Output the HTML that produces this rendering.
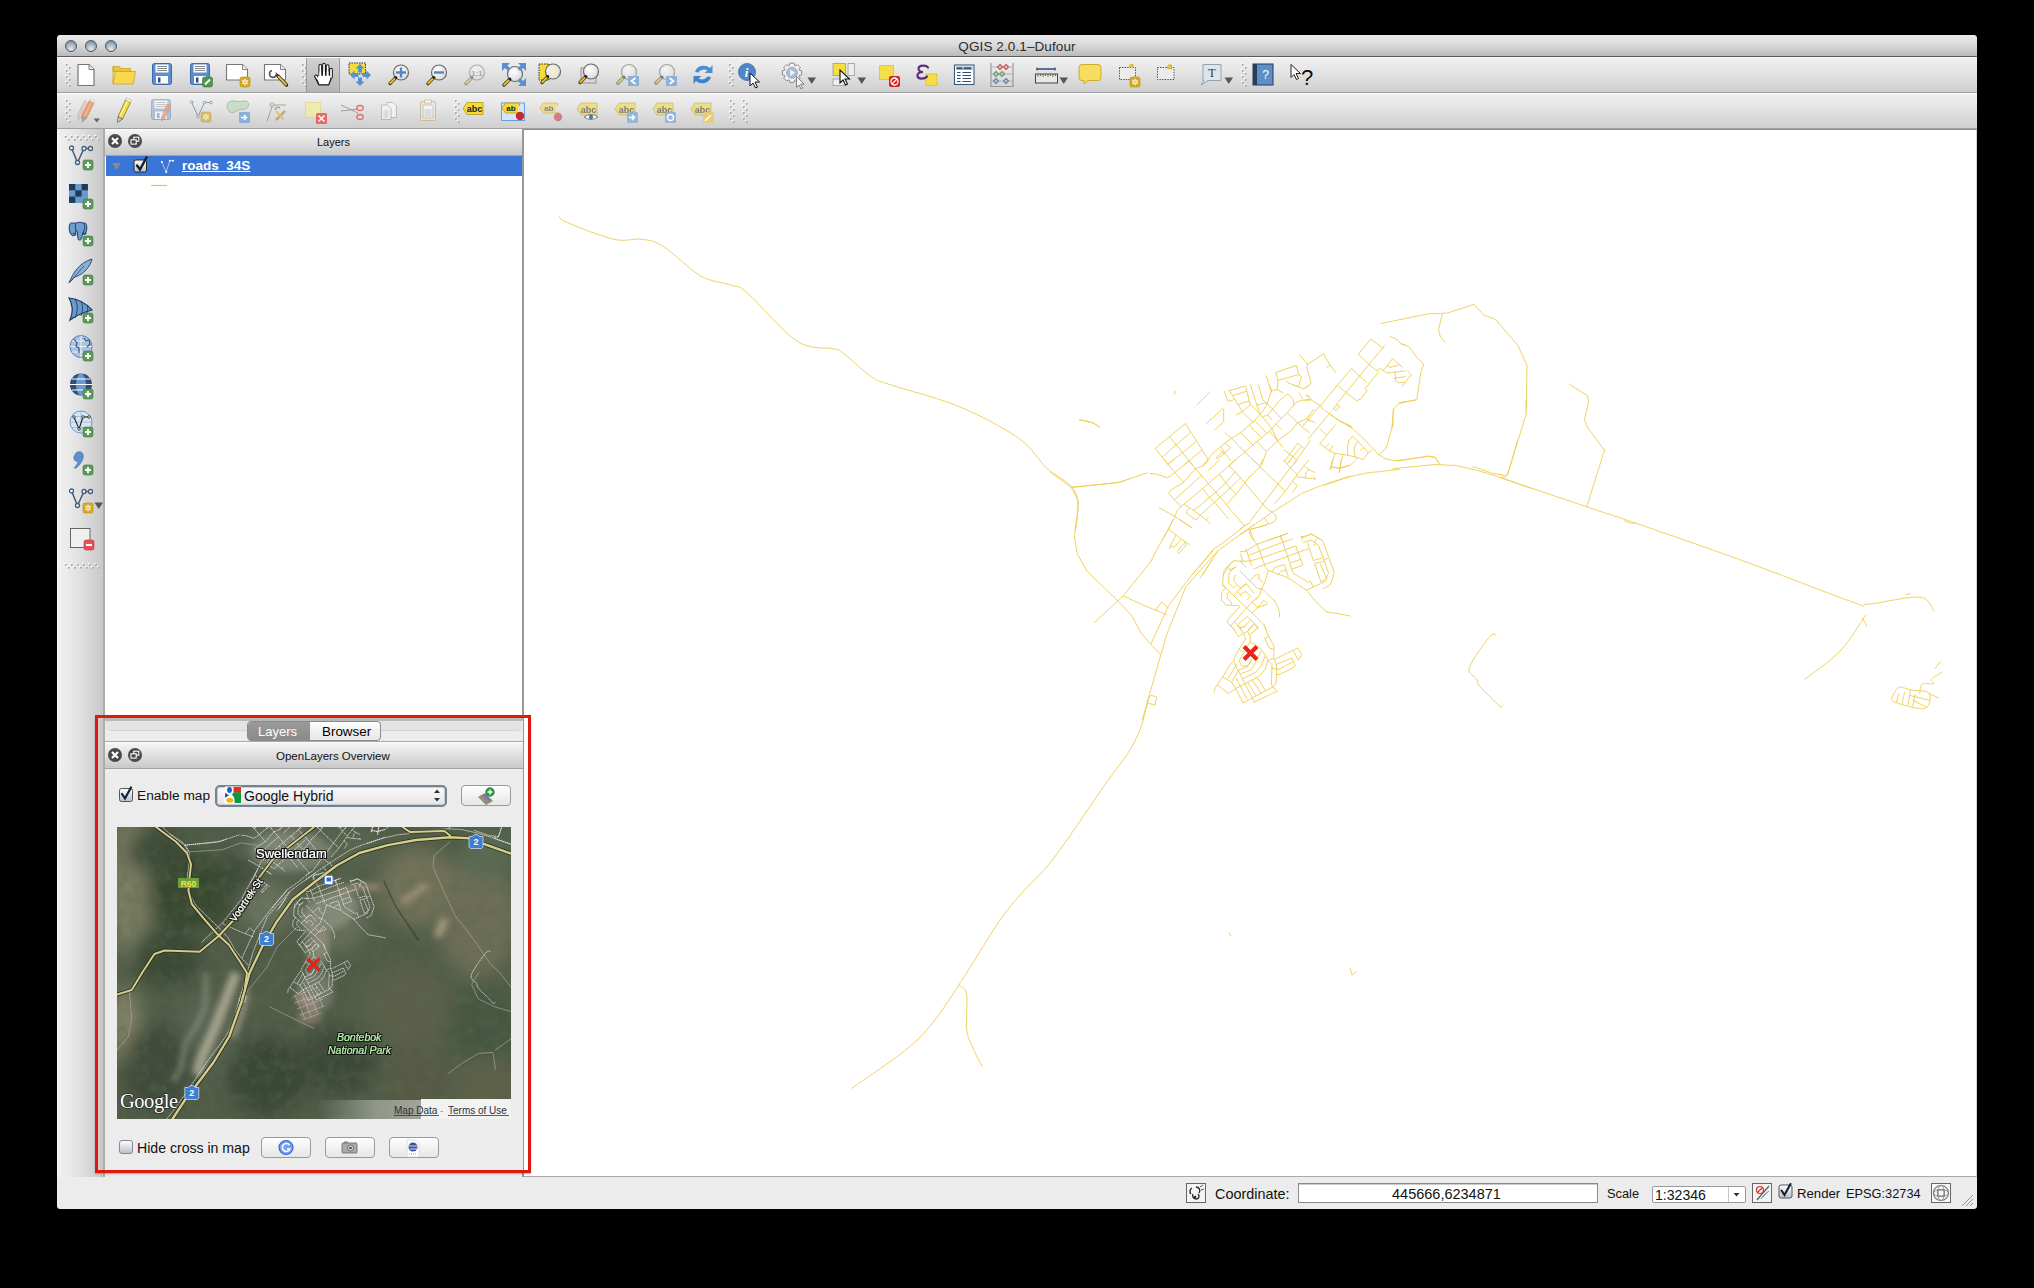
<!DOCTYPE html>
<html><head><meta charset="utf-8">
<style>
*{box-sizing:border-box;margin:0;padding:0}
html,body{width:2034px;height:1288px;background:#000;overflow:hidden;font-family:"Liberation Sans",sans-serif;color:#000}
.a{position:absolute}
#win{position:absolute;left:57px;top:35px;width:1920px;height:1174px;background:#ececec;border-radius:4px 4px 4px 4px;border-left:1px solid #fafafa}
#title{position:absolute;left:57px;top:35px;width:1920px;height:22px;background:linear-gradient(#ececec,#d8d8d8 50%,#bababa);border-bottom:1px solid #5a5a5a;border-radius:4px 4px 0 0}
.tt{position:absolute;left:57px;width:1920px;top:39px;text-align:center;font-size:13.5px;color:#2a2a2a;letter-spacing:0.1px}
.tl{position:absolute;top:40px;width:12px;height:12px;border-radius:50%;background:radial-gradient(circle at 50% 80%,#e4eaf0 0,#aebbc6 45%,#7e8e9b 85%);border:1px solid #4e5c68}
.tb{position:absolute;left:57px;width:1920px;height:36px;background:linear-gradient(#f0f0f0,#e6e6e6 35%,#cfcfcf);border-bottom:1px solid #a0a0a0;border-top:1px solid #fbfbfb}
#ltb{position:absolute;left:57px;top:129px;width:48px;height:1048px;background:linear-gradient(90deg,#f2f2f2,#e0e0e0 50%,#c8c8c8);border-right:2px solid #acacac;border-left:1px solid #fafafa}
#map{position:absolute;left:524px;top:129px;width:1453px;height:1048px;background:#fff;border-top:1px solid #8a8a8a;border-bottom:1px solid #a8a8a8;border-right:1px solid #d4d4d4}
#layers{position:absolute;left:105px;top:129px;width:418px;height:586px;background:#fff}
.dh{position:absolute;height:27px;background:linear-gradient(#f5f5f5,#e2e2e2 45%,#c8c8c8);border-top:1px solid #fdfdfd;border-bottom:1px solid #a2a2a2;font-size:12px;text-align:center;color:#111}
#split{position:absolute;left:522px;top:129px;width:2px;height:1048px;background:#979797}
#lower{position:absolute;left:105px;top:718px;width:418px;height:454px;background:#ececec}
#status{position:absolute;left:57px;top:1177px;width:1920px;height:32px;background:#ececec;border-radius:0 0 4px 4px}
#red{position:absolute;left:95px;top:715px;width:436px;height:458px;border:3px solid #dd1a0c;box-shadow:0 1.5px 1.5px rgba(0,0,0,0.22)}
.txt{position:absolute;white-space:nowrap;font-size:13px;color:#111}
</style></head><body>
<div id="win"></div>
<div id="title"></div>
<div class="tt">QGIS 2.0.1–Dufour</div>
<div class="tl" style="left:65px"></div><div class="tl" style="left:85px"></div><div class="tl" style="left:105px"></div>
<div class="tb" style="top:57px"></div>
<div class="tb" style="top:93px"></div>
<div id="ltb"></div>
<div id="layers"></div>
<div class="dh" style="left:105px;top:129px;width:418px"><span style="position:absolute;left:212px;top:6px;font-size:11px">Layers</span></div>
<div class="a" style="left:106px;top:156px;width:416px;height:20px;background:#3a76d8"></div>
<div class="txt" style="left:182px;top:158px;font-size:13.5px;font-weight:bold;color:#fff;text-decoration:underline">roads_34S</div>
<div id="split"></div>
<div id="map"></div>
<div id="lower"></div>
<div class="a" style="left:105px;top:718px;width:418px;height:3px;background:#b8b8b8"></div>
<div class="a" style="left:106px;top:721px;width:416px;height:10px;background:#e3e3e3;border-radius:0 0 5px 5px;border-bottom:1px solid #d4d4d4"></div>
<div class="a" style="left:105px;top:741px;width:418px;height:1px;background:#a8a8a8"></div>
<!-- tabs -->
<div class="a" style="left:247px;top:721px;width:134px;height:20px;border-radius:4px;border:1px solid #8a8a8a;background:linear-gradient(#fff,#f0f0f0 50%,#e8e8e8);overflow:hidden">
  <div class="a" style="left:0;top:0;width:62px;height:18px;background:linear-gradient(#9a9a9a,#8a8a8a)"></div>
  <div class="txt" style="left:10px;top:2px;color:#fff">Layers</div>
  <div class="txt" style="left:74px;top:2px;color:#000;font-size:13.4px">Browser</div>
</div>
<div class="dh" style="left:105px;top:742px;width:418px;height:27px"><span style="position:absolute;left:171px;top:7px;font-size:11.5px">OpenLayers Overview</span></div>
<div class="txt" style="left:137px;top:788px;font-size:13.7px">Enable map</div>
<div class="a" style="left:215px;top:785px;width:232px;height:22px;border-radius:5px;border:2px solid #76828e;box-shadow:inset 0 0 0 1px #c4ccd6;background:linear-gradient(#fafafa,#f0f0f0 50%,#e4e4e4)"></div>
<div class="txt" style="left:244px;top:788px;font-size:14px">Google Hybrid</div>
<div class="a" style="left:461px;top:785px;width:50px;height:21px;border-radius:4px;border:1px solid #9a9a9a;background:linear-gradient(#fff,#f2f2f2 50%,#e6e6e6)"></div>
<!-- satellite placeholder -->
<div id="sat" class="a" style="left:117px;top:827px;width:394px;height:292px;background:#4e5a3e;overflow:hidden"></div>
<div class="txt" style="left:137px;top:1140px;font-size:14.1px">Hide cross in map</div>
<div class="a" style="left:261px;top:1137px;width:50px;height:21px;border-radius:4px;border:1px solid #9a9a9a;background:linear-gradient(#fff,#f2f2f2 50%,#e6e6e6)"></div>
<div class="a" style="left:325px;top:1137px;width:50px;height:21px;border-radius:4px;border:1px solid #9a9a9a;background:linear-gradient(#fff,#f2f2f2 50%,#e6e6e6)"></div>
<div class="a" style="left:389px;top:1137px;width:50px;height:21px;border-radius:4px;border:1px solid #9a9a9a;background:linear-gradient(#fff,#f2f2f2 50%,#e6e6e6)"></div>
<div id="status"></div>
<div class="txt" style="left:1215px;top:1186px;font-size:14.4px">Coordinate:</div>
<div class="a" style="left:1298px;top:1183px;width:300px;height:20px;background:#fff;border:1px solid #8a8a8a;box-shadow:inset 0 1px 0 #ccc"></div>
<div class="txt" style="left:1392px;top:1186px;font-size:14.5px">445666,6234871</div>
<div class="txt" style="left:1607px;top:1186px;font-size:12.8px">Scale</div>
<div class="a" style="left:1652px;top:1186px;width:94px;height:17px;background:#fff;border:1px solid #9a9a9a;border-radius:2px"></div>
<div class="a" style="left:1728px;top:1187px;width:1px;height:15px;background:#c8c8c8"></div>
<div class="txt" style="left:1655px;top:1187px;font-size:14.1px">1:32346</div>
<div class="txt" style="left:1797px;top:1186px;font-size:13.2px">Render</div>
<div class="txt" style="left:1846px;top:1186px;font-size:12.8px">EPSG:32734</div>
<div id="red"></div>
<svg class="a" style="left:0;top:0" width="2034" height="1288" viewBox="0 0 2034 1288"><defs><clipPath id="mapclip"><rect x="525" y="130" width="1450" height="1046"/></clipPath></defs><g clip-path="url(#mapclip)" fill="none" stroke="#eecd50" stroke-width="0.9" stroke-linejoin="round" stroke-linecap="round"><path d="M1155.3 448.4 L1185.5 423.5 L1208.1 459.5 M1155.3 448.4 L1168.4 465.0 M1162.2 457.0 L1190.1 432.8 M1168.4 463.9 L1196.3 441.5 M1183.9 465.0 L1201.3 450.8 M1169.6 436.6 L1192.6 465.0 M1175.2 391.2 L1174.6 394.3 M1197.0 404.9 L1210.0 391.8 M1206.3 423.5 L1210.0 420.1 M1203.2 465.0 L1210.0 457.0 M1155.0 552.9 L1168.4 529.0 L1173.0 520.0 M1168.4 529.0 L1181.4 539.3 L1189.5 544.8 M1175.8 535.2 L1170.5 545.8 L1169.3 548.6 M1170.5 545.8 L1173.9 547.3 L1181.4 539.3 M1185.4 541.7 L1177.4 551.7 L1178.9 553.5 L1186.1 545.2 L1184.8 543.0 M1180.5 520.0 L1191.6 527.5 M1210.0 456.4 L1220.6 446.5 L1230.5 439.0 L1241.1 432.2 L1254.7 420.4 L1260.3 414.2 L1266.5 405.5 L1270.9 392.5 L1271.5 390.6 L1269.6 385.0 M1271.5 390.6 L1277.1 389.7 L1282.7 392.5 M1277.7 385.0 L1277.1 389.7 M1229.3 465.0 L1241.1 455.2 L1247.3 449.6 L1261.6 437.8 L1269.6 431.0 L1275.8 424.1 L1287.0 413.0 L1295.7 403.0 L1300.1 400.5 L1310.0 399.3 M1266.5 451.5 L1278.3 440.3 L1290.7 431.0 L1297.6 422.9 L1306.9 418.5 L1310.0 414.8 M1284.5 461.4 L1297.6 443.1 L1304.4 448.7 M1287.6 463.3 L1301.3 446.5 M1293.2 465.0 L1310.0 440.9 M1210.0 419.8 L1211.9 418.9 L1222.4 408.9 L1223.7 409.2 L1223.7 421.6 L1215.0 429.7 M1236.1 414.8 L1242.9 411.7 L1250.4 404.3 M1263.4 416.7 L1268.4 414.2 L1272.1 409.8 L1279.6 400.5 L1287.0 394.3 L1290.1 395.6 L1293.2 399.9 L1293.9 405.5 M1224.9 432.8 L1233.0 439.7 L1241.7 449.0 L1258.4 465.0 M1241.1 432.8 L1253.5 445.6 M1249.8 425.4 L1253.5 429.7 L1261.6 437.8 M1254.1 420.4 L1261.6 427.9 L1266.5 432.8 M1257.2 441.5 L1266.5 451.5 L1261.6 465.0 M1251.0 404.9 L1259.7 413.6 L1271.5 427.9 L1277.7 440.9 L1282.7 447.1 M1267.1 403.6 L1272.1 408.6 L1281.4 418.5 M1269.6 431.6 L1277.7 440.9 M1275.8 424.1 L1281.4 429.1 M1287.6 413.0 L1297.6 422.9 L1309.4 432.8 M1267.8 414.8 L1271.5 419.8 M1283.9 449.6 L1289.5 453.9 L1293.2 457.0 L1297.0 460.8 M1306.9 419.2 L1310.0 421.0 M1229.3 390.6 L1245.4 385.9 L1250.4 404.9 M1233.0 395.6 L1246.6 391.2 M1238.6 404.3 L1249.1 401.1 M1224.3 391.2 L1228.0 401.5 L1234.2 399.6 M1229.3 390.6 L1234.8 399.3 L1242.3 411.7 L1252.9 422.3 M1250.4 385.0 L1259.7 413.6 M1258.4 385.0 L1262.8 399.9 L1267.1 403.6 M1257.2 404.9 L1264.7 403.0 L1267.1 403.6 M1299.4 393.1 L1302.5 398.7 M1306.9 395.2 L1310.0 397.4 M1293.2 385.0 L1298.2 386.9 L1303.8 388.7 L1309.4 385.0 M1216.2 457.7 L1223.0 452.1 L1224.3 453.9 L1217.5 458.9 L1216.2 457.7 M1219.9 450.2 L1224.3 453.3 M1220.6 446.5 L1230.5 460.8 M1225.5 443.4 L1230.5 447.7 L1225.5 452.1 M1307.5 364.2 L1323.6 353.9 L1329.8 364.8 L1335.4 372.5 M1326.7 367.3 L1329.8 364.8 M1307.5 364.2 L1306.9 368.5 L1311.2 383.4 L1305.0 388.4 M1358.4 354.2 L1370.8 339.0 L1382.6 348.0 L1384.5 345.2 M1358.4 354.2 L1369.0 364.5 L1377.0 371.0 L1379.5 368.2 L1383.3 370.4 L1386.4 372.9 L1405.0 371.0 M1320.5 405.8 L1337.3 385.3 L1351.6 368.5 L1359.0 375.7 L1366.5 382.2 M1332.3 410.0 L1346.0 392.4 L1369.0 364.5 L1382.6 348.0 M1337.3 385.3 L1346.0 392.4 L1356.6 400.8 L1360.9 398.9 L1367.1 390.9 L1365.2 388.4 L1378.9 371.9 M1306.2 395.2 L1310.0 398.3 L1312.5 400.8 L1320.5 405.8 L1323.6 410.0 M1305.0 400.2 L1310.6 400.2 M1336.1 404.5 L1339.8 406.4 L1336.7 410.0 M1383.3 370.4 L1392.6 358.6 L1402.5 367.3 M1387.6 366.0 L1390.1 367.3 L1398.2 365.4 M1395.1 372.2 L1395.7 380.9 L1398.2 382.8 L1405.0 382.2 M1393.8 378.4 L1405.0 376.6 M1390.1 336.8 L1393.2 337.5 L1397.5 339.9 L1400.7 343.7 L1405.0 344.9 M1393.2 410.0 L1398.2 403.9 L1405.0 402.0 M1150.0 473.4 L1156.2 474.0 L1167.4 477.7 L1170.5 476.1 L1174.8 472.4 L1189.1 460.9 M1164.3 460.0 L1174.8 472.4 L1183.5 482.4 M1168.6 463.7 L1173.0 460.0 M1189.1 460.9 L1195.3 468.7 L1201.6 475.5 L1208.4 483.6 L1215.8 492.3 L1221.4 498.8 L1232.6 512.2 L1244.4 525.8 M1195.3 468.7 L1203.4 465.6 L1207.1 461.9 L1208.4 460.0 M1195.3 468.7 L1183.5 482.4 L1171.1 489.8 L1168.6 492.9 L1174.2 499.8 L1181.1 506.6 M1174.2 499.8 L1201.6 475.5 M1181.1 506.6 L1208.4 483.6 L1228.9 465.9 L1235.7 460.0 M1228.9 465.9 L1235.1 471.8 L1240.7 478.0 L1250.0 489.2 M1219.6 474.3 L1225.8 483.0 L1230.1 488.0 L1236.3 493.9 M1193.5 510.3 L1199.7 506.0 L1209.6 497.3 L1215.8 492.3 L1225.8 483.0 L1235.1 471.8 M1200.3 515.3 L1214.6 502.2 L1230.1 488.0 L1240.7 478.0 M1227.0 504.1 L1236.3 493.9 L1250.0 476.1 M1208.4 470.6 L1219.6 460.0 M1202.8 488.6 L1205.9 492.9 L1209.6 497.3 L1214.6 502.2 L1228.3 518.4 M1159.3 507.8 L1174.8 516.5 L1191.6 527.7 M1181.1 506.6 L1177.3 510.3 L1174.8 516.5 L1168.6 528.9 L1162.4 540.0 M1184.2 504.4 L1193.5 510.3 L1200.3 515.3 L1205.9 519.6 L1210.2 523.4 M1189.1 508.4 L1186.6 511.6 L1187.3 514.0 L1196.0 520.2 L1200.3 515.3 M1205.9 519.6 L1208.4 517.5 M1244.4 525.8 L1250.0 522.7 M1227.0 540.0 L1244.4 525.8 M1232.6 540.0 L1250.0 528.3 M1250.0 476.8 L1259.9 466.8 M1253.1 460.0 L1259.9 466.8 L1278.0 484.2 L1285.4 491.1 M1259.9 466.8 L1262.4 460.0 M1283.5 460.0 L1290.4 467.8 L1297.2 474.6 M1287.9 463.1 L1290.4 460.0 M1250.0 521.5 L1263.0 504.1 L1278.0 484.2 L1290.4 467.8 L1297.2 460.0 M1250.0 489.2 L1263.0 504.1 L1268.0 509.7 L1272.4 512.2 L1275.5 514.7 L1276.1 519.0 L1273.6 522.1 L1268.6 524.0 L1259.3 527.1 L1250.0 529.6 M1274.8 503.5 L1285.4 491.1 L1297.2 474.6 L1304.0 465.6 L1309.0 460.0 M1304.0 465.6 L1308.4 469.3 L1314.6 472.4 M1308.4 469.3 L1305.3 474.9 L1305.9 478.0 M1297.2 476.8 L1305.9 478.0 L1312.7 478.6 L1315.8 479.3 L1313.4 476.8 M1292.9 481.7 L1297.2 485.5 L1292.9 492.3 M1250.0 527.7 L1264.3 517.8 L1272.4 512.2 L1301.6 493.5 L1318.3 486.7 L1350.0 476.1 M1264.3 517.8 L1268.6 524.0 M1250.0 530.2 L1253.7 540.0 M1330.1 469.3 L1332.6 460.0 M1330.7 466.8 L1340.1 468.4 L1350.0 465.3 M1339.4 472.4 L1341.3 460.0 M1268.6 540.0 L1287.9 533.3 M1280.4 535.8 L1281.7 540.0 M1300.3 535.8 L1302.8 537.6 L1311.5 533.9 L1321.4 540.0 M1302.2 537.0 L1301.6 540.0 M1320.0 429.2 L1326.5 434.8 M1320.0 443.6 L1327.0 434.8 L1335.4 425.0 M1320.0 443.6 L1328.9 450.6 L1334.9 453.4 L1348.0 455.3 L1357.7 457.6 L1363.3 459.5 M1325.1 447.4 L1328.9 443.6 M1328.9 450.6 L1333.0 446.0 M1348.0 455.3 L1347.5 448.3 L1348.9 440.4 L1352.6 436.2 L1358.2 441.8 L1363.8 447.4 L1368.0 453.0 L1363.3 459.5 M1355.4 457.2 L1354.0 450.6 L1355.4 444.1 L1358.2 441.8 M1360.5 450.6 L1363.3 447.8 M1368.0 453.0 L1371.7 450.2 M1347.0 425.0 L1352.6 428.7 L1359.6 434.8 L1366.6 441.8 L1378.7 454.8 L1385.2 458.6 L1392.2 460.4 L1400.0 460.4 M1378.7 454.8 L1385.7 448.8 L1387.6 443.6 L1392.7 425.0 M1334.9 453.4 L1331.2 466.9 L1330.3 469.7 M1342.8 454.8 L1339.6 468.3 L1339.1 472.5 M1331.2 466.9 L1339.1 468.3 L1350.3 465.1 L1357.3 458.6 M1324.7 485.0 L1348.0 477.2 L1366.6 473.0 L1400.0 469.3 M1240.0 534.3 L1254.0 525.0 M1240.0 529.1 L1245.2 525.0 M1249.3 532.0 L1251.1 529.1 L1257.5 527.3 L1266.8 525.0 M1249.3 532.0 L1250.5 536.1 L1256.9 544.2 L1259.2 550.0 L1264.5 564.6 L1265.6 567.5 L1268.5 570.4 L1266.8 575.7 L1264.5 583.2 L1261.5 589.1 L1259.8 594.9 L1255.7 600.0 M1240.0 551.8 L1245.8 551.2 L1256.9 544.2 L1280.8 536.1 L1287.8 533.2 M1245.8 548.9 L1251.6 565.2 M1248.7 555.3 L1259.2 551.2 L1281.9 542.5 L1292.4 539.0 M1240.0 561.1 L1249.3 561.1 L1262.1 557.6 L1284.3 550.0 L1295.9 546.0 L1302.9 565.2 L1291.3 569.3 M1240.0 561.1 L1246.4 567.5 M1240.6 554.1 L1242.9 561.1 M1254.0 568.7 L1264.5 564.6 L1287.2 556.5 L1298.2 552.4 L1308.1 548.9 M1280.8 536.1 L1291.8 569.3 L1293.6 573.3 L1308.7 582.7 L1310.5 580.9 L1312.8 586.7 M1290.7 562.9 L1300.6 559.4 M1268.5 570.4 L1287.2 577.4 L1306.4 590.2 L1314.5 600.0 M1272.6 571.6 L1274.4 567.5 L1284.3 564.6 L1288.3 576.3 L1287.2 577.4 M1277.9 574.5 L1280.8 571.6 L1286.0 569.8 M1301.2 537.2 L1311.6 534.3 L1322.7 540.7 L1334.4 572.8 L1330.3 585.0 L1323.3 588.5 M1302.9 542.5 L1311.1 540.1 L1315.1 542.5 M1307.6 543.1 L1313.4 560.5 L1323.3 557.6 M1313.4 545.4 L1316.3 543.6 L1318.6 546.0 L1323.9 559.9 L1328.5 572.8 L1326.2 578.6 L1321.0 582.1 L1314.5 563.4 L1323.3 561.7 M1316.3 539.0 L1314.5 543.1 M1320.4 564.0 L1326.8 579.2 M1323.9 559.9 L1327.9 558.2 M1306.4 590.2 L1321.5 583.2 L1326.2 580.9 M1240.0 571.0 L1257.5 588.5 L1262.1 589.1 M1249.9 580.3 L1256.3 574.5 L1259.2 575.1 L1258.6 578.6 L1263.3 582.7 M1240.0 588.5 L1246.4 583.8 L1254.0 593.1 M1240.0 594.9 L1245.2 591.4 L1250.5 596.1 L1247.0 600.0 M1262.7 589.6 L1273.8 600.0 M1079.4 419.6 L1090.4 422.2 L1093.5 423.3 L1099.3 427.0 M1191.9 575.0 L1212.9 551.1 M1202.4 575.0 L1217.1 552.2 M1223.4 575.0 L1228.6 565.8 L1233.9 560.5 M1229.7 570.0 L1236.0 566.8 M1496.0 634.8 C1494.8 635.2 1493.4 632.1 1489.0 637.6 C1484.6 643.0 1471.5 660.7 1469.4 667.6 C1467.4 674.5 1474.8 675.8 1476.4 678.8 C1478.1 681.8 1476.4 682.3 1479.2 685.8 C1482.0 689.3 1489.7 696.3 1493.2 699.8 C1496.7 703.3 1498.6 705.8 1500.2 706.8 C1501.8 707.7 1502.5 705.6 1503.0 705.4 M1229.0 933.0 L1231.0 936.0 M1350.0 968.0 L1352.0 975.0 L1356.0 972.0 M1275.9 372.4 L1296.5 365.3 L1298.7 374.6 L1278.0 380.5 L1275.9 372.4 M1298.7 374.6 L1301.4 376.7 L1298.7 386.5 M1286.2 380.5 L1287.8 382.7 L1297.6 386.5 M1266.1 375.7 L1271.5 392.0 M1320.4 405.0 L1303.0 425.7 M1330.2 412.6 L1308.5 438.7 M1324.8 410.4 L1338.9 420.2 L1352.0 426.7 M1313.9 409.3 L1306.3 419.1 L1315.0 422.4 M1200.0 578.1 L1212.0 560.0 M1326.4 611.7 L1350.4 616.0 M1233.5 561.1 L1227.0 567.1 L1224.0 570.3 L1223.2 576.3 L1222.6 585.0 L1225.3 588.3 L1222.1 591.5 L1221.2 600.2 L1226.4 605.1 L1231.3 605.4 L1238.9 605.7 L1239.7 606.7 L1228.0 619.8 L1227.2 622.0 L1234.6 630.0 M1222.6 585.0 L1241.1 602.9 L1246.5 607.8 L1253.0 613.8 L1263.9 624.7 L1266.1 630.0 M1227.0 567.1 L1231.3 570.9 L1235.7 566.8 M1231.3 570.9 L1229.1 573.0 L1228.6 582.8 L1233.5 587.7 L1236.2 585.0 M1235.7 575.2 L1234.0 576.6 L1234.3 581.7 L1241.1 588.3 M1234.0 594.8 L1245.4 583.9 M1237.3 591.2 L1241.6 596.1 M1229.1 592.1 L1227.2 593.7 L1227.2 598.0 L1231.3 602.4 L1231.3 605.1 M1230.8 625.8 L1246.0 608.4 L1257.4 597.0 M1274.2 600.2 L1277.5 606.2 L1279.7 612.7 L1279.4 617.1 M1257.4 607.8 L1263.9 600.2 L1267.7 604.0 L1257.4 607.8 M1252.5 612.7 L1257.4 607.8 M1252.0 601.8 L1257.4 607.3 M1234.6 621.4 L1241.1 630.0 M1238.4 624.1 L1247.1 616.5 L1254.1 623.0 L1257.9 627.4 L1255.2 630.0 M1239.5 627.9 L1243.3 627.4 L1250.3 620.3 M1248.2 630.0 L1254.1 623.6 M1233.5 560.5 L1242.2 561.6 M1229.8 625.0 L1233.1 628.3 L1238.4 636.6 L1242.3 634.2 L1247.6 631.3 L1253.6 625.0 M1238.4 625.0 L1241.0 627.6 L1244.3 627.0 L1246.3 625.0 M1240.4 628.3 L1244.3 634.9 L1245.6 638.9 L1239.0 649.4 L1233.8 658.7 L1234.4 661.0 L1231.1 663.3 L1222.5 677.1 L1217.3 684.7 L1215.3 687.7 L1214.3 692.3 M1247.6 631.3 L1250.3 636.9 L1250.3 641.5 L1248.3 644.8 L1245.0 651.4 L1239.0 660.6 L1242.3 666.6 L1248.3 665.3 L1251.6 659.3 M1249.6 634.9 L1258.2 627.6 L1254.9 625.0 M1264.1 625.0 L1268.1 634.9 L1274.0 646.1 L1273.7 657.3 M1264.8 638.2 L1268.1 636.6 M1264.8 638.2 L1269.4 648.1 L1273.4 649.4 M1250.3 642.5 L1255.5 644.8 L1260.8 648.8 L1265.4 655.4 L1268.1 660.6 L1272.0 664.6 L1271.4 684.4 L1272.7 687.0 M1239.0 649.4 L1243.7 652.1 M1268.1 660.6 L1273.4 658.0 L1276.0 663.3 L1276.7 669.9 L1276.0 683.1 L1272.7 687.0 M1274.7 659.3 L1297.8 647.8 L1301.7 654.7 L1298.4 660.0 L1293.2 650.7 M1276.0 664.6 L1291.8 658.0 L1295.1 665.3 L1293.2 667.9 L1279.3 674.5 L1276.7 674.5 M1272.0 668.6 L1279.3 669.2 L1292.5 662.0 M1222.5 677.1 L1231.8 682.4 L1235.7 688.4 L1228.5 693.6 L1217.3 684.7 M1227.8 679.1 L1236.4 664.6 M1231.8 681.8 L1239.0 669.9 M1234.4 663.3 L1244.3 682.4 L1252.2 697.6 L1254.2 702.2 M1235.7 688.4 L1243.0 702.9 M1236.4 678.5 L1247.0 698.9 M1247.6 682.4 L1256.2 695.6 M1252.2 679.8 L1261.5 693.6 M1257.5 677.8 L1265.4 690.3 M1235.7 688.4 L1258.8 676.5 L1264.8 669.9 L1268.1 660.6 M1243.0 678.5 L1255.5 672.5 L1261.5 665.3 L1265.4 655.4 M1241.0 673.8 L1250.9 669.9 L1254.9 663.9 L1260.8 651.4 M1239.0 669.9 L1247.0 667.2 L1251.6 659.3 M1243.0 702.9 L1252.9 697.6 L1272.7 687.0 L1277.3 691.0 L1254.2 702.2 M1392.9 468.7 L1434.8 464.5 L1455.8 465.5 L1476.8 470.2 L1497.7 476.5 L1530.0 488.1 M1472.6 467.6 L1473.6 466.6 L1492.5 473.4 L1507.1 475.5 L1526.0 414.7 L1526.0 400.0 M1398.1 460.8 L1429.6 456.1 L1434.8 457.1 L1439.5 463.9 M1392.9 426.2 L1393.4 409.4 M1399.2 403.1 L1416.0 400.0 M1330.0 414.2 L1339.4 421.0 L1351.0 427.3 M1334.2 409.4 L1336.3 411.0 M1381.1 323.5 L1427.6 313.9 L1441.6 313.4 L1447.8 312.9 L1474.2 304.4 L1483.5 314.9 L1496.0 319.6 L1499.1 323.5 L1513.0 339.8 L1517.7 345.2 L1527.0 365.4 L1526.2 410.4 M1442.4 313.4 L1438.5 329.7 L1440.1 335.9 L1445.0 342.4 M1401.2 343.7 L1409.0 346.8 L1413.7 353.0 L1416.8 357.6 L1423.8 363.9 L1420.7 373.2 L1416.8 399.6 L1399.7 402.7 M1393.5 408.9 L1391.9 427.5 M1396.6 460.9 L1427.6 456.2 L1435.4 457.8 L1440.1 464.8 M1568.9 384.0 L1587.6 395.7 L1588.4 402.7 L1584.5 419.8 L1587.6 427.5 L1604.7 450.8 M1407.5 370.8 L1411.3 374.7 L1402.0 386.4 M559.2 216.3 C560.5 217.4 558.2 218.7 567.3 222.5 C576.4 226.4 601.4 236.5 613.9 239.3 C626.3 242.1 633.5 238.1 641.8 239.3 C650.1 240.5 653.7 240.4 663.5 246.5 C673.4 252.6 689.4 269.5 700.8 276.0 C712.2 282.4 724.1 282.4 731.9 285.3 C739.6 288.1 736.5 283.7 747.4 293.0 C758.3 302.4 782.6 331.9 797.1 341.2 C811.6 350.5 826.6 346.9 834.3 348.9 C842.1 351.0 837.5 348.9 843.7 353.6 C849.9 358.3 863.9 371.7 871.6 376.9 C879.4 382.1 875.8 379.7 890.2 384.7 C904.7 389.6 937.3 397.6 958.6 406.4 C979.8 415.2 1003.1 427.4 1017.6 437.5 C1032.1 447.5 1038.8 460.5 1045.5 467.0 C1052.3 473.4 1053.6 472.9 1058.0 476.3 C1062.3 479.6 1068.6 482.7 1071.9 487.1 C1075.3 491.5 1077.6 495.5 1078.1 502.7 C1078.7 509.8 1075.5 525.4 1075.0 530.0 M1071.9 487.1 C1079.4 486.4 1107.3 483.9 1117.0 482.5 C1126.6 481.0 1127.8 479.1 1130.0 478.4 M1079.7 419.8 C1081.8 420.2 1088.9 421.4 1092.1 422.5 C1095.4 423.7 1098.1 426.2 1099.3 426.9 M1500.0 477.5 C1514.5 482.4 1564.1 499.2 1586.8 506.8 C1609.4 514.5 1609.4 514.1 1636.0 523.3 C1662.6 532.4 1710.3 548.9 1746.2 562.0 C1782.2 575.0 1831.5 594.8 1851.8 601.8 C1872.1 608.9 1856.9 604.9 1868.2 604.2 C1879.5 603.4 1908.8 596.0 1919.8 597.1 C1930.7 598.3 1931.5 608.9 1933.9 611.2 M1905.7 594.8 L1910.4 593.6 M1624.3 520.9 C1625.5 521.3 1629.4 523.1 1631.3 523.3 C1633.3 523.5 1635.2 522.3 1636.0 522.1 M1586.8 506.8 C1589.5 498.0 1600.3 463.5 1603.2 454.1 C1606.1 444.7 1604.2 451.1 1604.4 450.6 M1500.0 474.0 C1501.2 474.2 1504.1 480.8 1507.0 475.2 C1510.0 469.5 1515.8 445.9 1517.6 440.0 M1804.9 679.2 C1810.7 674.5 1829.9 661.8 1840.1 651.1 C1850.2 640.3 1861.6 620.8 1865.9 614.7 M1862.3 618.2 L1867.0 626.4 M1891.7 698.0 C1892.8 696.2 1895.6 688.8 1898.7 687.4 C1901.8 686.1 1905.3 688.8 1910.4 689.8 C1915.5 690.7 1926.8 690.2 1929.2 693.3 C1931.5 696.4 1930.0 707.0 1924.5 708.5 C1919.0 710.1 1901.8 704.4 1896.3 702.7 C1890.9 700.9 1892.4 698.8 1891.7 698.0 M1898.7 693.3 L1896.3 702.7 M1904.5 692.1 L1902.2 703.8 M1910.4 689.8 L1908.1 705.0 M1915.1 694.5 L1912.8 706.2 M1910.4 695.6 L1929.2 700.3 M1912.8 700.3 L1926.8 707.4 M1919.8 693.3 C1920.2 691.7 1919.8 685.5 1922.1 683.9 C1924.5 682.3 1932.3 684.7 1933.9 683.9 C1935.4 683.1 1930.2 681.2 1931.5 679.2 C1932.9 677.3 1940.3 673.3 1942.1 672.2 M1929.2 693.3 L1938.6 698.0 M1935.0 668.7 L1940.4 661.6 M1050.0 471.9 L1071.4 487.5 L1078.2 501.1 L1077.2 520.5 L1074.3 536.0 L1077.2 553.5 L1086.9 571.0 L1118.0 601.1 L1131.6 615.6 L1141.3 633.1 L1151.0 644.8 L1160.7 654.5 M1071.4 487.5 L1118.0 482.6 L1147.1 472.9 M1094.7 622.4 L1123.8 595.2 L1151.0 561.3 M1123.8 596.2 L1145.1 605.9 L1166.5 614.7 M1155.8 609.8 L1161.7 602.0 L1168.4 607.9 M1151.0 643.8 L1168.4 605.9 L1185.9 582.6 L1213.1 549.6 M1142.2 720.1 L1166.5 635.0 L1185.9 586.5 L1217.0 551.6 M1147.1 701.1 L1151.0 695.2 L1156.8 697.2 L1154.9 705.0 L1147.1 703.0 M1148.3 700.0 C1147.0 704.7 1143.9 719.2 1140.6 728.0 C1137.2 736.7 1134.3 743.0 1128.1 752.8 C1121.9 762.6 1115.7 769.4 1103.3 787.0 C1090.9 804.6 1067.6 840.3 1053.6 858.4 C1039.6 876.5 1028.8 884.8 1019.4 895.7 C1010.1 906.5 1007.5 909.1 997.7 923.6 C987.9 938.1 971.3 966.0 960.4 982.6 C949.6 999.2 941.8 1011.6 932.5 1023.0 C923.2 1034.4 918.0 1040.1 904.5 1050.9 C891.1 1061.8 860.5 1082.0 851.7 1088.2 M958.9 985.7 C960.2 987.0 965.4 986.2 966.6 993.5 C967.9 1000.7 965.6 1020.1 966.6 1029.2 C967.7 1038.3 970.3 1041.6 972.9 1047.8 C975.4 1054.0 980.6 1063.4 982.2 1066.5 M1213.0 549.6 L1227.0 540.0 M1217.0 551.6 L1232.6 540.0 M1314.5 600.0 L1326.4 611.7 M1151.0 561.3 L1155.0 552.9 M1299.2 354.5 L1307.5 364.2 M1278.0 380.5 L1277.7 385.0"/></g><path d="M1244 646.5l13 13M1257 646.5l-13 13" stroke="#ee2418" stroke-width="4.2"/></svg><svg class="a" style="left:117px;top:827px" width="394" height="292" viewBox="0 0 394 292">
<defs>
<filter id="blr" x="-30%" y="-30%" width="160%" height="160%"><feGaussianBlur stdDeviation="9"/></filter>
<filter id="blr2" x="-30%" y="-30%" width="160%" height="160%"><feGaussianBlur stdDeviation="3"/></filter>
<filter id="noise" x="0" y="0" width="100%" height="100%"><feTurbulence type="fractalNoise" baseFrequency="0.09" numOctaves="3" seed="7"/><feColorMatrix type="matrix" values="0 0 0 0 0.1  0 0 0 0 0.14  0 0 0 0 0.08  0 0 0 1.1 -0.45"/></filter>
<filter id="halo"><feMorphology operator="dilate" radius="1.2" in="SourceAlpha" result="d"/><feFlood flood-color="#111"/><feComposite in2="d" operator="in" result="s"/><feMerge><feMergeNode in="s"/><feMergeNode in="SourceGraphic"/></feMerge></filter>
</defs>
<rect width="394" height="292" fill="#515c47"/>
<g filter="url(#blr)">
<ellipse cx="12" cy="60" rx="22" ry="70" fill="#7a7e62"/>
<ellipse cx="8" cy="200" rx="16" ry="40" fill="#858468"/>
<ellipse cx="75" cy="65" rx="45" ry="38" fill="#37472f"/>
<ellipse cx="40" cy="25" rx="30" ry="22" fill="#3a4a34"/>
<ellipse cx="50" cy="130" rx="35" ry="30" fill="#3b4a36"/>
<ellipse cx="120" cy="50" rx="25" ry="22" fill="#3c4c38"/>
<ellipse cx="150" cy="80" rx="28" ry="25" fill="#6a735e"/>
<ellipse cx="165" cy="20" rx="35" ry="22" fill="#6d7662"/>
<ellipse cx="230" cy="20" rx="30" ry="18" fill="#5a6650"/>
<ellipse cx="220" cy="90" rx="30" ry="35" fill="#68705a"/>
<ellipse cx="300" cy="60" rx="40" ry="40" fill="#727258"/>
<ellipse cx="360" cy="90" rx="40" ry="60" fill="#6e6e56"/>
<ellipse cx="370" cy="30" rx="25" ry="25" fill="#5a6a52"/>
<ellipse cx="90" cy="205" rx="28" ry="40" fill="#596451"/>
<ellipse cx="40" cy="240" rx="35" ry="45" fill="#3f4c3a"/>
<ellipse cx="150" cy="250" rx="40" ry="40" fill="#3a4736"/>
<ellipse cx="220" cy="235" rx="40" ry="35" fill="#3d4a38"/>
<ellipse cx="290" cy="180" rx="45" ry="40" fill="#5b5e48"/>
<ellipse cx="300" cy="250" rx="35" ry="35" fill="#565a44"/>
<ellipse cx="365" cy="200" rx="35" ry="40" fill="#475640"/>
<ellipse cx="370" cy="260" rx="30" ry="30" fill="#5e614a"/>
</g>
<rect width="394" height="292" filter="url(#noise)" opacity="0.85"/>
<g filter="url(#blr2)" opacity="0.55">
<ellipse cx="212" cy="85" rx="30" ry="18" fill="#9aa08e" transform="rotate(-20 212 85)"/>
<ellipse cx="200" cy="120" rx="12" ry="22" fill="#8e9482"/>
<ellipse cx="198" cy="165" rx="18" ry="22" fill="#8c9080"/>
<ellipse cx="192" cy="190" rx="12" ry="7" fill="#b09088"/>
<ellipse cx="175" cy="25" rx="40" ry="20" fill="#8a9282"/>
</g>
<!-- river & industrial light strips -->
<g filter="url(#blr2)" opacity="0.85">
<path d="M119 146L108 175L96 205L85 230L80 248" stroke="#b4b09a" stroke-width="10" fill="none"/>
<path d="M130 165L123 190L115 210" stroke="#9a9a84" stroke-width="7" fill="none"/>
<path d="M89 146L88 180L79 200L68 216L64 240L57 255" stroke="#a0a892" stroke-width="3" fill="none"/>
<path d="M220 65L240 60L262 60" stroke="#b09a80" stroke-width="5" fill="none"/>
<path d="M285 75L300 65L310 58" stroke="#a89a80" stroke-width="6" fill="none"/>
<path d="M320 110L328 92" stroke="#b0a288" stroke-width="8" fill="none"/>
<path d="M190 90L205 110L200 130" stroke="#8a8a78" stroke-width="14" fill="none"/>
<path d="M180 170L200 180" stroke="#a08a80" stroke-width="10" fill="none"/>
</g>
<!-- town grids -->
<g transform="translate(196.7,137.5) scale(0.72) translate(-1250.5,-653)" fill="none" stroke="#f0f0f0" stroke-width="1.35" stroke-dasharray="2 0.8" opacity="0.8"><path d="M1155.3 448.4 L1185.5 423.5 L1208.1 459.5 M1155.3 448.4 L1168.4 465.0 M1162.2 457.0 L1190.1 432.8 M1168.4 463.9 L1196.3 441.5 M1183.9 465.0 L1201.3 450.8 M1169.6 436.6 L1192.6 465.0 M1175.2 391.2 L1174.6 394.3 M1197.0 404.9 L1210.0 391.8 M1206.3 423.5 L1210.0 420.1 M1203.2 465.0 L1210.0 457.0 M1155.0 552.9 L1168.4 529.0 L1173.0 520.0 M1168.4 529.0 L1181.4 539.3 L1189.5 544.8 M1175.8 535.2 L1170.5 545.8 L1169.3 548.6 M1170.5 545.8 L1173.9 547.3 L1181.4 539.3 M1185.4 541.7 L1177.4 551.7 L1178.9 553.5 L1186.1 545.2 L1184.8 543.0 M1180.5 520.0 L1191.6 527.5 M1210.0 456.4 L1220.6 446.5 L1230.5 439.0 L1241.1 432.2 L1254.7 420.4 L1260.3 414.2 L1266.5 405.5 L1270.9 392.5 L1271.5 390.6 L1269.6 385.0 M1271.5 390.6 L1277.1 389.7 L1282.7 392.5 M1277.7 385.0 L1277.1 389.7 M1229.3 465.0 L1241.1 455.2 L1247.3 449.6 L1261.6 437.8 L1269.6 431.0 L1275.8 424.1 L1287.0 413.0 L1295.7 403.0 L1300.1 400.5 L1310.0 399.3 M1266.5 451.5 L1278.3 440.3 L1290.7 431.0 L1297.6 422.9 L1306.9 418.5 L1310.0 414.8 M1284.5 461.4 L1297.6 443.1 L1304.4 448.7 M1287.6 463.3 L1301.3 446.5 M1293.2 465.0 L1310.0 440.9 M1210.0 419.8 L1211.9 418.9 L1222.4 408.9 L1223.7 409.2 L1223.7 421.6 L1215.0 429.7 M1236.1 414.8 L1242.9 411.7 L1250.4 404.3 M1263.4 416.7 L1268.4 414.2 L1272.1 409.8 L1279.6 400.5 L1287.0 394.3 L1290.1 395.6 L1293.2 399.9 L1293.9 405.5 M1224.9 432.8 L1233.0 439.7 L1241.7 449.0 L1258.4 465.0 M1241.1 432.8 L1253.5 445.6 M1249.8 425.4 L1253.5 429.7 L1261.6 437.8 M1254.1 420.4 L1261.6 427.9 L1266.5 432.8 M1257.2 441.5 L1266.5 451.5 L1261.6 465.0 M1251.0 404.9 L1259.7 413.6 L1271.5 427.9 L1277.7 440.9 L1282.7 447.1 M1267.1 403.6 L1272.1 408.6 L1281.4 418.5 M1269.6 431.6 L1277.7 440.9 M1275.8 424.1 L1281.4 429.1 M1287.6 413.0 L1297.6 422.9 L1309.4 432.8 M1267.8 414.8 L1271.5 419.8 M1283.9 449.6 L1289.5 453.9 L1293.2 457.0 L1297.0 460.8 M1306.9 419.2 L1310.0 421.0 M1229.3 390.6 L1245.4 385.9 L1250.4 404.9 M1233.0 395.6 L1246.6 391.2 M1238.6 404.3 L1249.1 401.1 M1224.3 391.2 L1228.0 401.5 L1234.2 399.6 M1229.3 390.6 L1234.8 399.3 L1242.3 411.7 L1252.9 422.3 M1250.4 385.0 L1259.7 413.6 M1258.4 385.0 L1262.8 399.9 L1267.1 403.6 M1257.2 404.9 L1264.7 403.0 L1267.1 403.6 M1299.4 393.1 L1302.5 398.7 M1306.9 395.2 L1310.0 397.4 M1293.2 385.0 L1298.2 386.9 L1303.8 388.7 L1309.4 385.0 M1216.2 457.7 L1223.0 452.1 L1224.3 453.9 L1217.5 458.9 L1216.2 457.7 M1219.9 450.2 L1224.3 453.3 M1220.6 446.5 L1230.5 460.8 M1225.5 443.4 L1230.5 447.7 L1225.5 452.1 M1307.5 364.2 L1323.6 353.9 L1329.8 364.8 L1335.4 372.5 M1326.7 367.3 L1329.8 364.8 M1307.5 364.2 L1306.9 368.5 L1311.2 383.4 L1305.0 388.4 M1358.4 354.2 L1370.8 339.0 L1382.6 348.0 L1384.5 345.2 M1358.4 354.2 L1369.0 364.5 L1377.0 371.0 L1379.5 368.2 L1383.3 370.4 L1386.4 372.9 L1405.0 371.0 M1320.5 405.8 L1337.3 385.3 L1351.6 368.5 L1359.0 375.7 L1366.5 382.2 M1332.3 410.0 L1346.0 392.4 L1369.0 364.5 L1382.6 348.0 M1337.3 385.3 L1346.0 392.4 L1356.6 400.8 L1360.9 398.9 L1367.1 390.9 L1365.2 388.4 L1378.9 371.9 M1306.2 395.2 L1310.0 398.3 L1312.5 400.8 L1320.5 405.8 L1323.6 410.0 M1305.0 400.2 L1310.6 400.2 M1336.1 404.5 L1339.8 406.4 L1336.7 410.0 M1383.3 370.4 L1392.6 358.6 L1402.5 367.3 M1387.6 366.0 L1390.1 367.3 L1398.2 365.4 M1395.1 372.2 L1395.7 380.9 L1398.2 382.8 L1405.0 382.2 M1393.8 378.4 L1405.0 376.6 M1390.1 336.8 L1393.2 337.5 L1397.5 339.9 L1400.7 343.7 L1405.0 344.9 M1393.2 410.0 L1398.2 403.9 L1405.0 402.0 M1150.0 473.4 L1156.2 474.0 L1167.4 477.7 L1170.5 476.1 L1174.8 472.4 L1189.1 460.9 M1164.3 460.0 L1174.8 472.4 L1183.5 482.4 M1168.6 463.7 L1173.0 460.0 M1189.1 460.9 L1195.3 468.7 L1201.6 475.5 L1208.4 483.6 L1215.8 492.3 L1221.4 498.8 L1232.6 512.2 L1244.4 525.8 M1195.3 468.7 L1203.4 465.6 L1207.1 461.9 L1208.4 460.0 M1195.3 468.7 L1183.5 482.4 L1171.1 489.8 L1168.6 492.9 L1174.2 499.8 L1181.1 506.6 M1174.2 499.8 L1201.6 475.5 M1181.1 506.6 L1208.4 483.6 L1228.9 465.9 L1235.7 460.0 M1228.9 465.9 L1235.1 471.8 L1240.7 478.0 L1250.0 489.2 M1219.6 474.3 L1225.8 483.0 L1230.1 488.0 L1236.3 493.9 M1193.5 510.3 L1199.7 506.0 L1209.6 497.3 L1215.8 492.3 L1225.8 483.0 L1235.1 471.8 M1200.3 515.3 L1214.6 502.2 L1230.1 488.0 L1240.7 478.0 M1227.0 504.1 L1236.3 493.9 L1250.0 476.1 M1208.4 470.6 L1219.6 460.0 M1202.8 488.6 L1205.9 492.9 L1209.6 497.3 L1214.6 502.2 L1228.3 518.4 M1159.3 507.8 L1174.8 516.5 L1191.6 527.7 M1181.1 506.6 L1177.3 510.3 L1174.8 516.5 L1168.6 528.9 L1162.4 540.0 M1184.2 504.4 L1193.5 510.3 L1200.3 515.3 L1205.9 519.6 L1210.2 523.4 M1189.1 508.4 L1186.6 511.6 L1187.3 514.0 L1196.0 520.2 L1200.3 515.3 M1205.9 519.6 L1208.4 517.5 M1244.4 525.8 L1250.0 522.7 M1227.0 540.0 L1244.4 525.8 M1232.6 540.0 L1250.0 528.3 M1250.0 476.8 L1259.9 466.8 M1253.1 460.0 L1259.9 466.8 L1278.0 484.2 L1285.4 491.1 M1259.9 466.8 L1262.4 460.0 M1283.5 460.0 L1290.4 467.8 L1297.2 474.6 M1287.9 463.1 L1290.4 460.0 M1250.0 521.5 L1263.0 504.1 L1278.0 484.2 L1290.4 467.8 L1297.2 460.0 M1250.0 489.2 L1263.0 504.1 L1268.0 509.7 L1272.4 512.2 L1275.5 514.7 L1276.1 519.0 L1273.6 522.1 L1268.6 524.0 L1259.3 527.1 L1250.0 529.6 M1274.8 503.5 L1285.4 491.1 L1297.2 474.6 L1304.0 465.6 L1309.0 460.0 M1304.0 465.6 L1308.4 469.3 L1314.6 472.4 M1308.4 469.3 L1305.3 474.9 L1305.9 478.0 M1297.2 476.8 L1305.9 478.0 L1312.7 478.6 L1315.8 479.3 L1313.4 476.8 M1292.9 481.7 L1297.2 485.5 L1292.9 492.3 M1250.0 527.7 L1264.3 517.8 L1272.4 512.2 L1301.6 493.5 L1318.3 486.7 L1350.0 476.1 M1264.3 517.8 L1268.6 524.0 M1250.0 530.2 L1253.7 540.0 M1330.1 469.3 L1332.6 460.0 M1330.7 466.8 L1340.1 468.4 L1350.0 465.3 M1339.4 472.4 L1341.3 460.0 M1268.6 540.0 L1287.9 533.3 M1280.4 535.8 L1281.7 540.0 M1300.3 535.8 L1302.8 537.6 L1311.5 533.9 L1321.4 540.0 M1302.2 537.0 L1301.6 540.0 M1320.0 429.2 L1326.5 434.8 M1320.0 443.6 L1327.0 434.8 L1335.4 425.0 M1320.0 443.6 L1328.9 450.6 L1334.9 453.4 L1348.0 455.3 L1357.7 457.6 L1363.3 459.5 M1325.1 447.4 L1328.9 443.6 M1328.9 450.6 L1333.0 446.0 M1348.0 455.3 L1347.5 448.3 L1348.9 440.4 L1352.6 436.2 L1358.2 441.8 L1363.8 447.4 L1368.0 453.0 L1363.3 459.5 M1355.4 457.2 L1354.0 450.6 L1355.4 444.1 L1358.2 441.8 M1360.5 450.6 L1363.3 447.8 M1368.0 453.0 L1371.7 450.2 M1347.0 425.0 L1352.6 428.7 L1359.6 434.8 L1366.6 441.8 L1378.7 454.8 L1385.2 458.6 L1392.2 460.4 L1400.0 460.4 M1378.7 454.8 L1385.7 448.8 L1387.6 443.6 L1392.7 425.0 M1334.9 453.4 L1331.2 466.9 L1330.3 469.7 M1342.8 454.8 L1339.6 468.3 L1339.1 472.5 M1331.2 466.9 L1339.1 468.3 L1350.3 465.1 L1357.3 458.6 M1324.7 485.0 L1348.0 477.2 L1366.6 473.0 L1400.0 469.3 M1240.0 534.3 L1254.0 525.0 M1240.0 529.1 L1245.2 525.0 M1249.3 532.0 L1251.1 529.1 L1257.5 527.3 L1266.8 525.0 M1249.3 532.0 L1250.5 536.1 L1256.9 544.2 L1259.2 550.0 L1264.5 564.6 L1265.6 567.5 L1268.5 570.4 L1266.8 575.7 L1264.5 583.2 L1261.5 589.1 L1259.8 594.9 L1255.7 600.0 M1240.0 551.8 L1245.8 551.2 L1256.9 544.2 L1280.8 536.1 L1287.8 533.2 M1245.8 548.9 L1251.6 565.2 M1248.7 555.3 L1259.2 551.2 L1281.9 542.5 L1292.4 539.0 M1240.0 561.1 L1249.3 561.1 L1262.1 557.6 L1284.3 550.0 L1295.9 546.0 L1302.9 565.2 L1291.3 569.3 M1240.0 561.1 L1246.4 567.5 M1240.6 554.1 L1242.9 561.1 M1254.0 568.7 L1264.5 564.6 L1287.2 556.5 L1298.2 552.4 L1308.1 548.9 M1280.8 536.1 L1291.8 569.3 L1293.6 573.3 L1308.7 582.7 L1310.5 580.9 L1312.8 586.7 M1290.7 562.9 L1300.6 559.4 M1268.5 570.4 L1287.2 577.4 L1306.4 590.2 L1314.5 600.0 M1272.6 571.6 L1274.4 567.5 L1284.3 564.6 L1288.3 576.3 L1287.2 577.4 M1277.9 574.5 L1280.8 571.6 L1286.0 569.8 M1301.2 537.2 L1311.6 534.3 L1322.7 540.7 L1334.4 572.8 L1330.3 585.0 L1323.3 588.5 M1302.9 542.5 L1311.1 540.1 L1315.1 542.5 M1307.6 543.1 L1313.4 560.5 L1323.3 557.6 M1313.4 545.4 L1316.3 543.6 L1318.6 546.0 L1323.9 559.9 L1328.5 572.8 L1326.2 578.6 L1321.0 582.1 L1314.5 563.4 L1323.3 561.7 M1316.3 539.0 L1314.5 543.1 M1320.4 564.0 L1326.8 579.2 M1323.9 559.9 L1327.9 558.2 M1306.4 590.2 L1321.5 583.2 L1326.2 580.9 M1240.0 571.0 L1257.5 588.5 L1262.1 589.1 M1249.9 580.3 L1256.3 574.5 L1259.2 575.1 L1258.6 578.6 L1263.3 582.7 M1240.0 588.5 L1246.4 583.8 L1254.0 593.1 M1240.0 594.9 L1245.2 591.4 L1250.5 596.1 L1247.0 600.0 M1262.7 589.6 L1273.8 600.0 M1079.4 419.6 L1090.4 422.2 L1093.5 423.3 L1099.3 427.0 M1191.9 575.0 L1212.9 551.1 M1202.4 575.0 L1217.1 552.2 M1223.4 575.0 L1228.6 565.8 L1233.9 560.5 M1229.7 570.0 L1236.0 566.8 M1496.0 634.8 C1494.8 635.2 1493.4 632.1 1489.0 637.6 C1484.6 643.0 1471.5 660.7 1469.4 667.6 C1467.4 674.5 1474.8 675.8 1476.4 678.8 C1478.1 681.8 1476.4 682.3 1479.2 685.8 C1482.0 689.3 1489.7 696.3 1493.2 699.8 C1496.7 703.3 1498.6 705.8 1500.2 706.8 C1501.8 707.7 1502.5 705.6 1503.0 705.4 M1229.0 933.0 L1231.0 936.0 M1350.0 968.0 L1352.0 975.0 L1356.0 972.0 M1275.9 372.4 L1296.5 365.3 L1298.7 374.6 L1278.0 380.5 L1275.9 372.4 M1298.7 374.6 L1301.4 376.7 L1298.7 386.5 M1286.2 380.5 L1287.8 382.7 L1297.6 386.5 M1266.1 375.7 L1271.5 392.0 M1320.4 405.0 L1303.0 425.7 M1330.2 412.6 L1308.5 438.7 M1324.8 410.4 L1338.9 420.2 L1352.0 426.7 M1313.9 409.3 L1306.3 419.1 L1315.0 422.4 M1200.0 578.1 L1212.0 560.0 M1326.4 611.7 L1350.4 616.0 M1233.5 561.1 L1227.0 567.1 L1224.0 570.3 L1223.2 576.3 L1222.6 585.0 L1225.3 588.3 L1222.1 591.5 L1221.2 600.2 L1226.4 605.1 L1231.3 605.4 L1238.9 605.7 L1239.7 606.7 L1228.0 619.8 L1227.2 622.0 L1234.6 630.0 M1222.6 585.0 L1241.1 602.9 L1246.5 607.8 L1253.0 613.8 L1263.9 624.7 L1266.1 630.0 M1227.0 567.1 L1231.3 570.9 L1235.7 566.8 M1231.3 570.9 L1229.1 573.0 L1228.6 582.8 L1233.5 587.7 L1236.2 585.0 M1235.7 575.2 L1234.0 576.6 L1234.3 581.7 L1241.1 588.3 M1234.0 594.8 L1245.4 583.9 M1237.3 591.2 L1241.6 596.1 M1229.1 592.1 L1227.2 593.7 L1227.2 598.0 L1231.3 602.4 L1231.3 605.1 M1230.8 625.8 L1246.0 608.4 L1257.4 597.0 M1274.2 600.2 L1277.5 606.2 L1279.7 612.7 L1279.4 617.1 M1257.4 607.8 L1263.9 600.2 L1267.7 604.0 L1257.4 607.8 M1252.5 612.7 L1257.4 607.8 M1252.0 601.8 L1257.4 607.3 M1234.6 621.4 L1241.1 630.0 M1238.4 624.1 L1247.1 616.5 L1254.1 623.0 L1257.9 627.4 L1255.2 630.0 M1239.5 627.9 L1243.3 627.4 L1250.3 620.3 M1248.2 630.0 L1254.1 623.6 M1233.5 560.5 L1242.2 561.6 M1229.8 625.0 L1233.1 628.3 L1238.4 636.6 L1242.3 634.2 L1247.6 631.3 L1253.6 625.0 M1238.4 625.0 L1241.0 627.6 L1244.3 627.0 L1246.3 625.0 M1240.4 628.3 L1244.3 634.9 L1245.6 638.9 L1239.0 649.4 L1233.8 658.7 L1234.4 661.0 L1231.1 663.3 L1222.5 677.1 L1217.3 684.7 L1215.3 687.7 L1214.3 692.3 M1247.6 631.3 L1250.3 636.9 L1250.3 641.5 L1248.3 644.8 L1245.0 651.4 L1239.0 660.6 L1242.3 666.6 L1248.3 665.3 L1251.6 659.3 M1249.6 634.9 L1258.2 627.6 L1254.9 625.0 M1264.1 625.0 L1268.1 634.9 L1274.0 646.1 L1273.7 657.3 M1264.8 638.2 L1268.1 636.6 M1264.8 638.2 L1269.4 648.1 L1273.4 649.4 M1250.3 642.5 L1255.5 644.8 L1260.8 648.8 L1265.4 655.4 L1268.1 660.6 L1272.0 664.6 L1271.4 684.4 L1272.7 687.0 M1239.0 649.4 L1243.7 652.1 M1268.1 660.6 L1273.4 658.0 L1276.0 663.3 L1276.7 669.9 L1276.0 683.1 L1272.7 687.0 M1274.7 659.3 L1297.8 647.8 L1301.7 654.7 L1298.4 660.0 L1293.2 650.7 M1276.0 664.6 L1291.8 658.0 L1295.1 665.3 L1293.2 667.9 L1279.3 674.5 L1276.7 674.5 M1272.0 668.6 L1279.3 669.2 L1292.5 662.0 M1222.5 677.1 L1231.8 682.4 L1235.7 688.4 L1228.5 693.6 L1217.3 684.7 M1227.8 679.1 L1236.4 664.6 M1231.8 681.8 L1239.0 669.9 M1234.4 663.3 L1244.3 682.4 L1252.2 697.6 L1254.2 702.2 M1235.7 688.4 L1243.0 702.9 M1236.4 678.5 L1247.0 698.9 M1247.6 682.4 L1256.2 695.6 M1252.2 679.8 L1261.5 693.6 M1257.5 677.8 L1265.4 690.3 M1235.7 688.4 L1258.8 676.5 L1264.8 669.9 L1268.1 660.6 M1243.0 678.5 L1255.5 672.5 L1261.5 665.3 L1265.4 655.4 M1241.0 673.8 L1250.9 669.9 L1254.9 663.9 L1260.8 651.4 M1239.0 669.9 L1247.0 667.2 L1251.6 659.3 M1243.0 702.9 L1252.9 697.6 L1272.7 687.0 L1277.3 691.0 L1254.2 702.2 M1392.9 468.7 L1434.8 464.5 L1455.8 465.5 L1476.8 470.2 L1497.7 476.5 L1530.0 488.1 M1472.6 467.6 L1473.6 466.6 L1492.5 473.4 L1507.1 475.5 L1526.0 414.7 L1526.0 400.0 M1398.1 460.8 L1429.6 456.1 L1434.8 457.1 L1439.5 463.9 M1392.9 426.2 L1393.4 409.4 M1399.2 403.1 L1416.0 400.0 M1330.0 414.2 L1339.4 421.0 L1351.0 427.3 M1334.2 409.4 L1336.3 411.0 M1381.1 323.5 L1427.6 313.9 L1441.6 313.4 L1447.8 312.9 L1474.2 304.4 L1483.5 314.9 L1496.0 319.6 L1499.1 323.5 L1513.0 339.8 L1517.7 345.2 L1527.0 365.4 L1526.2 410.4 M1442.4 313.4 L1438.5 329.7 L1440.1 335.9 L1445.0 342.4 M1401.2 343.7 L1409.0 346.8 L1413.7 353.0 L1416.8 357.6 L1423.8 363.9 L1420.7 373.2 L1416.8 399.6 L1399.7 402.7 M1393.5 408.9 L1391.9 427.5 M1396.6 460.9 L1427.6 456.2 L1435.4 457.8 L1440.1 464.8 M1568.9 384.0 L1587.6 395.7 L1588.4 402.7 L1584.5 419.8 L1587.6 427.5 L1604.7 450.8 M1407.5 370.8 L1411.3 374.7 L1402.0 386.4 M559.2 216.3 C560.5 217.4 558.2 218.7 567.3 222.5 C576.4 226.4 601.4 236.5 613.9 239.3 C626.3 242.1 633.5 238.1 641.8 239.3 C650.1 240.5 653.7 240.4 663.5 246.5 C673.4 252.6 689.4 269.5 700.8 276.0 C712.2 282.4 724.1 282.4 731.9 285.3 C739.6 288.1 736.5 283.7 747.4 293.0 C758.3 302.4 782.6 331.9 797.1 341.2 C811.6 350.5 826.6 346.9 834.3 348.9 C842.1 351.0 837.5 348.9 843.7 353.6 C849.9 358.3 863.9 371.7 871.6 376.9 C879.4 382.1 875.8 379.7 890.2 384.7 C904.7 389.6 937.3 397.6 958.6 406.4 C979.8 415.2 1003.1 427.4 1017.6 437.5 C1032.1 447.5 1038.8 460.5 1045.5 467.0 C1052.3 473.4 1053.6 472.9 1058.0 476.3 C1062.3 479.6 1068.6 482.7 1071.9 487.1 C1075.3 491.5 1077.6 495.5 1078.1 502.7 C1078.7 509.8 1075.5 525.4 1075.0 530.0 M1071.9 487.1 C1079.4 486.4 1107.3 483.9 1117.0 482.5 C1126.6 481.0 1127.8 479.1 1130.0 478.4 M1079.7 419.8 C1081.8 420.2 1088.9 421.4 1092.1 422.5 C1095.4 423.7 1098.1 426.2 1099.3 426.9 M1500.0 477.5 C1514.5 482.4 1564.1 499.2 1586.8 506.8 C1609.4 514.5 1609.4 514.1 1636.0 523.3 C1662.6 532.4 1710.3 548.9 1746.2 562.0 C1782.2 575.0 1831.5 594.8 1851.8 601.8 C1872.1 608.9 1856.9 604.9 1868.2 604.2 C1879.5 603.4 1908.8 596.0 1919.8 597.1 C1930.7 598.3 1931.5 608.9 1933.9 611.2 M1905.7 594.8 L1910.4 593.6 M1624.3 520.9 C1625.5 521.3 1629.4 523.1 1631.3 523.3 C1633.3 523.5 1635.2 522.3 1636.0 522.1 M1586.8 506.8 C1589.5 498.0 1600.3 463.5 1603.2 454.1 C1606.1 444.7 1604.2 451.1 1604.4 450.6 M1500.0 474.0 C1501.2 474.2 1504.1 480.8 1507.0 475.2 C1510.0 469.5 1515.8 445.9 1517.6 440.0 M1804.9 679.2 C1810.7 674.5 1829.9 661.8 1840.1 651.1 C1850.2 640.3 1861.6 620.8 1865.9 614.7 M1862.3 618.2 L1867.0 626.4 M1891.7 698.0 C1892.8 696.2 1895.6 688.8 1898.7 687.4 C1901.8 686.1 1905.3 688.8 1910.4 689.8 C1915.5 690.7 1926.8 690.2 1929.2 693.3 C1931.5 696.4 1930.0 707.0 1924.5 708.5 C1919.0 710.1 1901.8 704.4 1896.3 702.7 C1890.9 700.9 1892.4 698.8 1891.7 698.0 M1898.7 693.3 L1896.3 702.7 M1904.5 692.1 L1902.2 703.8 M1910.4 689.8 L1908.1 705.0 M1915.1 694.5 L1912.8 706.2 M1910.4 695.6 L1929.2 700.3 M1912.8 700.3 L1926.8 707.4 M1919.8 693.3 C1920.2 691.7 1919.8 685.5 1922.1 683.9 C1924.5 682.3 1932.3 684.7 1933.9 683.9 C1935.4 683.1 1930.2 681.2 1931.5 679.2 C1932.9 677.3 1940.3 673.3 1942.1 672.2 M1929.2 693.3 L1938.6 698.0 M1935.0 668.7 L1940.4 661.6 M1050.0 471.9 L1071.4 487.5 L1078.2 501.1 L1077.2 520.5 L1074.3 536.0 L1077.2 553.5 L1086.9 571.0 L1118.0 601.1 L1131.6 615.6 L1141.3 633.1 L1151.0 644.8 L1160.7 654.5 M1071.4 487.5 L1118.0 482.6 L1147.1 472.9 M1094.7 622.4 L1123.8 595.2 L1151.0 561.3 M1123.8 596.2 L1145.1 605.9 L1166.5 614.7 M1155.8 609.8 L1161.7 602.0 L1168.4 607.9 M1151.0 643.8 L1168.4 605.9 L1185.9 582.6 L1213.1 549.6 M1142.2 720.1 L1166.5 635.0 L1185.9 586.5 L1217.0 551.6 M1147.1 701.1 L1151.0 695.2 L1156.8 697.2 L1154.9 705.0 L1147.1 703.0 M1148.3 700.0 C1147.0 704.7 1143.9 719.2 1140.6 728.0 C1137.2 736.7 1134.3 743.0 1128.1 752.8 C1121.9 762.6 1115.7 769.4 1103.3 787.0 C1090.9 804.6 1067.6 840.3 1053.6 858.4 C1039.6 876.5 1028.8 884.8 1019.4 895.7 C1010.1 906.5 1007.5 909.1 997.7 923.6 C987.9 938.1 971.3 966.0 960.4 982.6 C949.6 999.2 941.8 1011.6 932.5 1023.0 C923.2 1034.4 918.0 1040.1 904.5 1050.9 C891.1 1061.8 860.5 1082.0 851.7 1088.2 M958.9 985.7 C960.2 987.0 965.4 986.2 966.6 993.5 C967.9 1000.7 965.6 1020.1 966.6 1029.2 C967.7 1038.3 970.3 1041.6 972.9 1047.8 C975.4 1054.0 980.6 1063.4 982.2 1066.5 M1213.0 549.6 L1227.0 540.0 M1217.0 551.6 L1232.6 540.0 M1314.5 600.0 L1326.4 611.7 M1151.0 561.3 L1155.0 552.9"/></g>
<g stroke="#e8e0dc" stroke-width="0.7" stroke-dasharray="1.5 0.7" fill="none" opacity="0.75">
<path d="M176 170L200 160M178 176L204 166M180 182L206 172M183 188L207 179M186 193L204 186"/>
<path d="M178 168L188 192M185 166L194 190M192 163L200 186M199 161L206 180"/>
</g>
<!-- roads -->
<g fill="none" stroke-linecap="round" stroke-linejoin="round">
<path d="M39 0L59 14.7L70 26L74 37.4L72.5 51L71.4 63.5L74.8 77L86 90.7L99.7 106.5L112 118L122.4 133.7L130 146L128 160" stroke="#2a2a22" stroke-width="3.6"/>
<path d="M25 146L37.4 127L47.6 123.5L82.7 124.7L102 108.8L114.5 95.2L127 81.6L141.7 51L156.4 31.7L172.3 19.3L197 0" stroke="#2a2a22" stroke-width="3.6"/>
<path d="M25 146L14.7 163L0 167.5" stroke="#2a2a22" stroke-width="3.6"/>
<path d="M55.5 292L68 273L79.3 258.2L96.4 235.5L112.2 209.5L124.7 174.3L132.6 146L145 120L158.7 96.3L175.7 72.5L197 55.5L219.7 38.5L242.3 26L270.7 18.1L299 13L333 10.2L352.3 11.3L367 17L394 26.6" stroke="#2a2a22" stroke-width="4"/>
<path d="M285.4 0L293.3 5.1L327.4 4L333 8.5L333 10.2" stroke="#2a2a22" stroke-width="3.4"/>
<g stroke="#d3cf8a">
<path d="M39 0L59 14.7L70 26L74 37.4L72.5 51L71.4 63.5L74.8 77L86 90.7L99.7 106.5L112 118L122.4 133.7L130 146L128 160" stroke-width="2"/>
<path d="M25 146L37.4 127L47.6 123.5L82.7 124.7L102 108.8L114.5 95.2L127 81.6L141.7 51L156.4 31.7L172.3 19.3L197 0" stroke-width="2"/>
<path d="M25 146L14.7 163L0 167.5" stroke-width="2"/>
<path d="M55.5 292L68 273L79.3 258.2L96.4 235.5L112.2 209.5L124.7 174.3L132.6 146L145 120L158.7 96.3L175.7 72.5L197 55.5L219.7 38.5L242.3 26L270.7 18.1L299 13L333 10.2L352.3 11.3L367 17L394 26.6" stroke-width="2.4"/>
<path d="M285.4 0L293.3 5.1L327.4 4L333 8.5L333 10.2" stroke-width="2"/>
</g>
<g stroke="#a8a898" stroke-width="0.9" opacity="0.75">
<path d="M70.3 25L105.4 22.7L123.6 15.9L139.4 18.1"/>
<path d="M12.5 165.3L14.7 191.3L11.3 209.5L0 223"/>
<path d="M333 14.7L317.2 28.3L316 39.7L327.4 65.7L338.7 89.5L355.7 111L372.7 136L383 146L394 160"/>
<path d="M361.4 146L354.6 157.3L361.4 172L378.4 180L394 184.5"/>
<path d="M330.8 246.9L344.4 236.7L361.4 226.5L376 225.3L378.4 242.3M378.4 223L394 211.7"/>
<path d="M153 180L197 201.5"/>
<path d="M130 165L150 140L160 120L180 100"/>
</g>
<path d="M267 54.4L278.6 79.3L301.3 113" stroke="#2e3a2a" stroke-width="1.5" opacity="0.6"/>
</g>
<!-- overlay bottom right -->
<defs><linearGradient id="ovl" x1="0" x2="1"><stop offset="0" stop-color="#fff" stop-opacity="0"/><stop offset="0.55" stop-color="#fff" stop-opacity="0.35"/><stop offset="1" stop-color="#fff" stop-opacity="0.45"/></linearGradient></defs>
<rect x="200" y="273" width="104" height="19" fill="url(#ovl)"/>
<rect x="304" y="272" width="90" height="20" fill="#fbfbfb" opacity="0.95"/>
<g font-family="Liberation Sans" font-size="10" fill="#2a3040">
<text x="277" y="286.5">Map Data</text><text x="323" y="286.5" fill="#999">-</text><text x="331" y="286.5">Terms of Use</text>
</g>
<path d="M277 288.5h45M331 288.5h61" stroke="#333" stroke-width="0.8"/>
<!-- labels -->
<g filter="url(#halo)">
<text x="139" y="31" font-family="Liberation Sans" font-size="13" fill="#fff">Swellendam</text>
<text x="220" y="214" font-family="Liberation Sans" font-style="italic" font-size="10.5" fill="#b4f0a8">Bontebok</text>
<text x="211" y="226.5" font-family="Liberation Sans" font-style="italic" font-size="10.5" fill="#b4f0a8">National Park</text>
<text transform="translate(129,73) rotate(-56)" text-anchor="middle" font-family="Liberation Sans" font-size="10" fill="#fff" dy="3.5">Voortrek St</text>
</g>
<rect x="61" y="51" width="21" height="10" fill="#6aa03a"/><text x="71.5" y="59.5" text-anchor="middle" font-family="Liberation Sans" font-weight="bold" font-size="8.5" fill="#f5e24a">R60</text>
<defs><g id="shield"><path d="M-7 -5.5h3l3-2h2l3 2h3v10.5l-1.5 1.5h-11l-1.5-1.5z" fill="#3f7fd0" stroke="#fff" stroke-width="0.6"/><text x="0" y="3.3" text-anchor="middle" font-family="Liberation Sans" font-weight="bold" font-size="9" fill="#fff">2</text></g></defs>
<use href="#shield" transform="translate(149.6,112)"/>
<use href="#shield" transform="translate(74.8,266)"/>
<use href="#shield" transform="translate(359,15)"/>
<rect x="207.5" y="48.5" width="8.5" height="9" rx="1.5" fill="#fff" stroke="#5a8ad0" stroke-width="1"/><rect x="209.5" y="50.5" width="4.5" height="4" fill="#3a6ac0"/>
<text x="3" y="281" font-family="Liberation Serif" font-size="20.5" fill="#fff" stroke="#2a2a2a" stroke-width="1.6" paint-order="stroke" stroke-linejoin="round" textLength="58">Google</text>
<path d="M190.5 131.5l12 12M202.5 131.5l-12 12" stroke="#e8201a" stroke-width="3.2"/>
</svg>
<svg class="a" style="left:0;top:0" width="2034" height="1288" viewBox="0 0 2034 1288"><defs>
<linearGradient id="gBlue" x1="0" y1="0" x2="0" y2="1"><stop offset="0" stop-color="#7fa8d8"/><stop offset="1" stop-color="#4a7cc0"/></linearGradient>
<linearGradient id="gPan" x1="0" y1="0" x2="0" y2="1"><stop offset="0" stop-color="#d2d2d2"/><stop offset="1" stop-color="#b4b4b4"/></linearGradient>
<radialGradient id="gLens" cx="0.4" cy="0.35" r="0.7"><stop offset="0" stop-color="#fff"/><stop offset="1" stop-color="#d8d8d8"/></radialGradient>
<linearGradient id="gChk" x1="0" y1="0" x2="0" y2="1"><stop offset="0" stop-color="#fff"/><stop offset="1" stop-color="#b8c0cc"/></linearGradient>
<g id="bPlus"><rect x="0" y="0" width="10" height="10" rx="2" fill="#5b9a57" stroke="#3f7a3c" stroke-width="0.6"/><path d="M5 2v6M2 5h6" stroke="#fff" stroke-width="2"/></g>
<g id="bStar"><rect x="0" y="0" width="10" height="10" rx="2" fill="#d7ac22" stroke="#b38a10" stroke-width="0.6"/><path d="M5 1.8v6.4M2.2 3.4l5.6 3.2M2.2 6.6l5.6-3.2" stroke="#fff" stroke-width="1.1"/><circle cx="5" cy="5" r="1.4" fill="#d7ac22" stroke="#fff" stroke-width="0.8"/></g>
<g id="bMinus"><rect x="0" y="0" width="10" height="10" rx="2" fill="#e84f57" stroke="#c03038" stroke-width="0.6"/><path d="M2 5h6" stroke="#fff" stroke-width="2"/></g>
<g id="handleV"><g fill="#fff"><circle cx="0" cy="0" r="1.2"/><circle cx="3" cy="3" r="1.2"/><circle cx="0" cy="6" r="1.2"/><circle cx="3" cy="9" r="1.2"/><circle cx="0" cy="12" r="1.2"/><circle cx="3" cy="15" r="1.2"/><circle cx="0" cy="18" r="1.2"/><circle cx="3" cy="21" r="1.2"/></g><g fill="#a0a0a0"><circle cx="0.7" cy="0.7" r="1.0"/><circle cx="3.7" cy="3.7" r="1.0"/><circle cx="0.7" cy="6.7" r="1.0"/><circle cx="3.7" cy="9.7" r="1.0"/><circle cx="0.7" cy="12.7" r="1.0"/><circle cx="3.7" cy="15.7" r="1.0"/><circle cx="0.7" cy="18.7" r="1.0"/><circle cx="3.7" cy="21.7" r="1.0"/></g></g>
<g id="handleH"><g fill="#fff"><circle cx="0" cy="0" r="1.2"/><circle cx="3" cy="3" r="1.2"/><circle cx="6" cy="0" r="1.2"/><circle cx="9" cy="3" r="1.2"/><circle cx="12" cy="0" r="1.2"/><circle cx="15" cy="3" r="1.2"/><circle cx="18" cy="0" r="1.2"/><circle cx="21" cy="3" r="1.2"/><circle cx="24" cy="0" r="1.2"/><circle cx="27" cy="3" r="1.2"/><circle cx="30" cy="0" r="1.2"/><circle cx="33" cy="3" r="1.2"/></g><g fill="#a0a0a0"><circle cx="0.7" cy="0.7" r="1.0"/><circle cx="3.7" cy="3.7" r="1.0"/><circle cx="6.7" cy="0.7" r="1.0"/><circle cx="9.7" cy="3.7" r="1.0"/><circle cx="12.7" cy="0.7" r="1.0"/><circle cx="15.7" cy="3.7" r="1.0"/><circle cx="18.7" cy="0.7" r="1.0"/><circle cx="21.7" cy="3.7" r="1.0"/><circle cx="24.7" cy="0.7" r="1.0"/><circle cx="27.7" cy="3.7" r="1.0"/><circle cx="30.7" cy="0.7" r="1.0"/><circle cx="33.7" cy="3.7" r="1.0"/></g></g>
<g id="mag"><circle cx="0" cy="0" r="7.5" fill="url(#gLens)" stroke="#6a6a6a" stroke-width="1.2"/><path d="M-5.2 5.2L-11 11" stroke="#222" stroke-width="3.2" stroke-linecap="round"/><path d="M-6.5 6.5L-10.8 10.8" stroke="#f1c40f" stroke-width="2" stroke-linecap="round"/></g>
<g id="vnode"><path d="M1.5 2L7.5 16.5L14 2.5H20.5" fill="none" stroke="#3f5a7a" stroke-width="1.5"/><circle cx="1.5" cy="2" r="2" fill="#fff" stroke="#3f5a7a" stroke-width="1.3"/><circle cx="7.5" cy="16.5" r="2" fill="#fff" stroke="#3f5a7a" stroke-width="1.3"/><circle cx="14" cy="2.5" r="2" fill="#fff" stroke="#3f5a7a" stroke-width="1.3"/><circle cx="20.5" cy="2.5" r="2" fill="#fff" stroke="#3f5a7a" stroke-width="1.3"/></g>
<g id="drop"><path d="M-0.5 -0.5h8.5l-4.25 6.5z" fill="#555"/></g>
<g id="abcTag"><path d="M0 6l4-6h16v12h-16z" fill="#f4d93a" stroke="#b49a10" stroke-width="0.8"/><text x="11.5" y="9.6" font-family="Liberation Sans" font-weight="bold" font-size="9" text-anchor="middle" fill="#222">abc</text></g>
<g id="closeBtn"><circle cx="0" cy="0" r="7" fill="#4a4a4a"/><path d="M-3 -3L3 3M3 -3L-3 3" stroke="#fff" stroke-width="2.2"/></g>
<g id="floatBtn"><circle cx="0" cy="0" r="7" fill="#4a4a4a"/><rect x="-1.2" y="-3.8" width="5" height="4" fill="none" stroke="#fff" stroke-width="1.1"/><rect x="-4" y="-1.2" width="5.2" height="4.3" fill="#4a4a4a" stroke="#fff" stroke-width="1.1"/></g>
</defs>
<!-- ===== Toolbar 1 ===== -->
<use href="#handleV" x="66" y="64"/>
<!-- new -->
<path d="M78 64.5h11l5 5v16h-16z" fill="#fff" stroke="#777" stroke-width="1.2" stroke-linejoin="round"/><path d="M89 64.5v5h5" fill="#eee" stroke="#777" stroke-width="1"/>
<!-- open folder -->
<path d="M113 66.5h6.5l1.5 2h9.5v3h-17.5z" fill="#e8c43a" stroke="#c9a520" stroke-width="0.8"/><path d="M113 84l2.5-12.5h20l-2.5 12.5z" fill="#fdd84e" stroke="#c9a520" stroke-width="0.8"/><path d="M113 66.5v17.5" stroke="#c9a520" stroke-width="0.8"/>
<!-- save -->
<g transform="translate(152,63)"><rect x="0.5" y="0.5" width="19" height="21" rx="2" fill="#5d8fcf" stroke="#3c6aa8" stroke-width="1"/><rect x="3.5" y="1.5" width="13" height="8" fill="#fff"/><path d="M5 3.5h10M5 5.5h10M5 7.5h10" stroke="#555" stroke-width="0.7"/><rect x="4" y="13" width="12" height="7.5" fill="#fff"/><rect x="6" y="14.5" width="2.5" height="5" fill="#2f4f7a"/></g>
<!-- save as -->
<g transform="translate(190,63)"><rect x="0.5" y="0.5" width="19" height="21" rx="2" fill="#5d8fcf" stroke="#3c6aa8" stroke-width="1"/><rect x="3.5" y="1.5" width="13" height="8" fill="#fff"/><path d="M5 3.5h10M5 5.5h10M5 7.5h10" stroke="#555" stroke-width="0.7"/><rect x="4" y="13" width="12" height="7.5" fill="#fff"/><rect x="6" y="14.5" width="2.5" height="5" fill="#2f4f7a"/><rect x="12.5" y="14" width="10" height="10" rx="2" fill="#4e9a4a" stroke="#357a32" stroke-width="0.6"/><path d="M15 21.5l5-5" stroke="#fff" stroke-width="1.8"/></g>
<!-- new composer -->
<path d="M226.5 64.5h16l5 5v10.5h-21z" fill="#fff" stroke="#777" stroke-width="1.1"/><path d="M242.5 64.5v5h5" fill="#eee" stroke="#777" stroke-width="0.9"/><use href="#bStar" x="240" y="77"/>
<!-- composer manager -->
<path d="M264.5 64.5h16l5 5v10.5h-21z" fill="#fff" stroke="#777" stroke-width="1.1"/><path d="M280.5 64.5v5h5" fill="#eee" stroke="#777" stroke-width="0.9"/><path d="M272 70.5a3.5 3.5 0 1 0 4.5 3.5l9.5 10" fill="none" stroke="#555" stroke-width="1.6"/><path d="M278 76l8.5 9" stroke="#222" stroke-width="3.4" stroke-linecap="round"/><path d="M278.5 76.5l7.5 8" stroke="#e8c030" stroke-width="2" stroke-linecap="round"/>
<use href="#handleV" x="302" y="64"/>
<!-- pan active bg -->
<rect x="306" y="58" width="34" height="34" fill="url(#gPan)"/><path d="M306.5 58v34M339.5 58v34" stroke="#9a9a9a" stroke-width="1"/>
<g stroke-linecap="round"><path d="M320.3 76V65.5M324 75V64.5M327.6 75.5V66M331 77V69.5M316 76.5l3 4" stroke="#111" stroke-width="3.6"/><path d="M318.5 85.5h10.5l2.5-6v-4h-14l-3.5 0.5z" fill="#111"/><path d="M320.3 76V65.5M324 75V64.5M327.6 75.5V66M331 77V69.5M316 76.5l3 4" stroke="#fff" stroke-width="1.7"/><path d="M319.3 84.3h9l1.9-5v-3.5h-12l-0.5 4z" fill="#fff"/><path d="M320.3 77V72M324 77V72M327.6 77V72" stroke="#fff" stroke-width="1.7"/></g>
<!-- pan to selection -->
<rect x="349" y="63" width="16.5" height="11" fill="#f3dc3a" stroke="#222" stroke-width="0.9" stroke-dasharray="1.5 1"/>
<g fill="#5b8fd0"><path d="M360 64l4.5 4.5h-2.5v4h-4v-4h-2.5z"/><path d="M360 86l4.5-4.5h-2.5v-4h-4v4h-2.5z"/><path d="M350 75l4.5-4.5v2.5h4v4h-4v2.5z"/><path d="M371 75l-4.5-4.5v2.5h-4v4h4v2.5z"/></g>
<!-- zoom in -->
<use href="#mag" x="401" y="72.5"/><path d="M401 67.5v10M396 72.5h10" stroke="#4f86c6" stroke-width="2.4"/>
<!-- zoom out -->
<use href="#mag" x="439" y="72.5"/><path d="M434 72.5h10" stroke="#4f86c6" stroke-width="2.4"/>
<!-- 1:1 -->
<g opacity="0.45"><use href="#mag" x="477" y="72.5"/></g><text x="477" y="76" font-family="Liberation Sans" font-weight="bold" font-size="8" text-anchor="middle" fill="#aaa">1:1</text>
<!-- zoom full -->
<use href="#mag" x="515" y="74"/>
<g fill="#5b8fd0"><path d="M502 63h8l-2.5 2.5 3 3-2.5 2.5-3-3-3 3z"/><path d="M526 63h-8l2.5 2.5-3 3 2.5 2.5 3-3 3 3z"/><path d="M526 86h-8l2.5-2.5-3-3 2.5-2.5 3 3 3-3z"/></g>
<!-- zoom to selection -->
<rect x="539" y="64" width="10" height="16" fill="#f3dc3a" stroke="#222" stroke-width="0.9" stroke-dasharray="1.5 1"/><use href="#mag" x="553" y="71.5"/><rect x="549" y="66" width="8" height="12" fill="#f0ead0" opacity="0.7"/>
<!-- zoom to layer -->
<rect x="581" y="68" width="15" height="15" fill="#e0d4e0" stroke="#8a7a8a" stroke-width="0.8"/><use href="#mag" x="591" y="71.5"/>
<!-- zoom last -->
<g opacity="0.55"><use href="#mag" x="629" y="72"/></g><rect x="628" y="76" width="11" height="10" fill="#8db0d8"/><path d="M635.5 78l-4 3 4 3" fill="none" stroke="#fff" stroke-width="1.6"/>
<!-- zoom next -->
<g opacity="0.55"><use href="#mag" x="667" y="72"/></g><rect x="666" y="76" width="11" height="10" fill="#8db0d8"/><path d="M669.5 78l4 3-4 3" fill="none" stroke="#fff" stroke-width="1.6"/>
<!-- refresh -->
<path d="M695 72a9 8 0 0 1 15-4l2.5-3v8h-8l3-2.5a6 5 0 0 0-9 2z" fill="#4a8fd6"/><path d="M711 77a9 8 0 0 1-15 4l-2.5 3v-8h8l-3 2.5a6 5 0 0 0 9-2z" fill="#3f82cc"/>
<use href="#handleV" x="729" y="64"/>
<!-- identify -->
<circle cx="747" cy="72" r="8.5" fill="#4e86c8" stroke="#3a6db0" stroke-width="0.8"/><text x="746.5" y="77" font-family="Liberation Serif" font-style="italic" font-weight="bold" font-size="13" text-anchor="middle" fill="#fff">i</text>
<path d="M750 73l0 13l3-3l2.5 5l2-1l-2.5-5h4.5z" fill="#fff" stroke="#111" stroke-width="1"/>
<!-- action -->
<path d="M799.13 70.17 L801.58 70.74 L801.58 74.86 L799.13 75.43 L798.90 75.98 L800.23 78.12 L797.32 81.03 L795.18 79.70 L794.63 79.93 L794.06 82.38 L789.94 82.38 L789.37 79.93 L788.82 79.70 L786.68 81.03 L783.77 78.12 L785.10 75.98 L784.87 75.43 L782.42 74.86 L782.42 70.74 L784.87 70.17 L785.10 69.62 L783.77 67.48 L786.68 64.57 L788.82 65.90 L789.37 65.67 L789.94 63.22 L794.06 63.22 L794.63 65.67 L795.18 65.90 L797.32 64.57 L800.23 67.48 L798.90 69.62z" fill="#f2f2f2" stroke="#8a8a8a" stroke-width="1" stroke-linejoin="round"/><circle cx="792.0" cy="72.8" r="5.4" fill="#a6bedc" stroke="#8a9aaa" stroke-width="0.8"/><path d="M790.3 69.5l4.8 3.3-4.8 3.3z" fill="#f4f4f4"/><path d="M796.5 76.5l0 11l2.5-2.5l2 4l1.6-.8l-2-4h3.6z" fill="#f4f4f4" stroke="#777" stroke-width="0.9"/>
<use href="#drop" x="808" y="78"/>
<!-- select -->
<rect x="833" y="63.5" width="12.5" height="12" fill="#f5dd3c" stroke="#999" stroke-width="0.8"/><rect x="848" y="63.5" width="6.5" height="12" fill="#eee" stroke="#999" stroke-width="0.8"/><rect x="833" y="79" width="12.5" height="6.5" fill="#eee" stroke="#999" stroke-width="0.8"/>
<path d="M840 70l0 13l3-3l2.5 5l2-1l-2.5-5h4.5z" fill="#fff" stroke="#111" stroke-width="1.1"/>
<use href="#drop" x="858" y="78"/>
<!-- deselect -->
<rect x="879.5" y="65.5" width="14" height="14" fill="#f5df48" stroke="#c9a820" stroke-width="0.8" stroke-dasharray="1.2 0.8"/><rect x="889" y="76" width="11" height="11" rx="2" fill="#d82020"/><circle cx="894.5" cy="81.5" r="3.5" fill="none" stroke="#fff" stroke-width="1.3"/><path d="M892 84l5-5" stroke="#fff" stroke-width="1.3"/>
<!-- expression -->
<rect x="926" y="74" width="11" height="11.5" fill="#f5df48" stroke="#c9a820" stroke-width="0.8" stroke-dasharray="1.2 0.8"/>
<path d="M928 67.5c-1.5-2.5-9-3-9.5 1c-.3 2.5 2 3.5 4.5 3.5c-3 0-6 1-5.5 4c.5 3.5 7 3.5 9.5 0.5" fill="none" stroke="#5a2d80" stroke-width="2.2" stroke-linecap="round"/>
<!-- attribute table -->
<g transform="translate(954.5,65)"><rect x="0" y="0" width="19.5" height="19.5" fill="#fff" stroke="#3a5a7a" stroke-width="1.1"/><rect x="1.5" y="1.5" width="16.5" height="3.5" fill="#8fb0d0"/><path d="M2.5 3.2h5M9.5 3.2h7" stroke="#2d4d6d" stroke-width="1.4"/><path d="M2.5 7.5h3.5M8 7.5h8.5M2.5 10.5h3.5M8 10.5h8.5M2.5 13.5h3.5M8 13.5h8.5M2.5 16.5h3.5M8 16.5h8.5" stroke="#2d4d6d" stroke-width="1.2"/></g>
<!-- stats abacus -->
<g transform="translate(990,63)"><path d="M1 0v23M23 0v23M0 23.5h24" stroke="#999" stroke-width="1.2"/><path d="M1 4h22M1 11h22M1 18h22" stroke="#aaa" stroke-width="0.9"/><g fill="none" stroke-width="1.1"><path d="M10 1.5l2.5 2.5-2.5 2.5-2.5-2.5z M16 1.5l2.5 2.5-2.5 2.5-2.5-2.5z" stroke="#d05050"/><path d="M6 8.5l2.5 2.5-2.5 2.5-2.5-2.5z M12 8.5l2.5 2.5-2.5 2.5-2.5-2.5z" stroke="#60a060"/><path d="M6 15.5l2.5 2.5-2.5 2.5-2.5-2.5z M16 15.5l2.5 2.5-2.5 2.5-2.5-2.5z" stroke="#6080b0"/></g></g>
<!-- measure -->
<g transform="translate(1035,67)"><path d="M2 0.5v3M20 0.5v3M2 2h18" stroke="#2d4d6d" stroke-width="1.3"/><rect x="0.5" y="7" width="22" height="9" fill="#e8e8e0" stroke="#444" stroke-width="1"/><path d="M3 7v3M5.5 7v2M8 7v3M10.5 7v2M13 7v3M15.5 7v2M18 7v3M20.5 7v2" stroke="#444" stroke-width="0.7"/></g>
<use href="#drop" x="1060" y="78"/>
<!-- map tip -->
<path d="M1082 64.5h16a3 3 0 0 1 3 3v10a3 3 0 0 1-3 3h-10l-4 3.5v-3.5h-2a3 3 0 0 1-3-3v-10a3 3 0 0 1 3-3z" fill="#f6dc60" stroke="#c8a820" stroke-width="0.9"/>
<!-- new bookmark -->
<rect x="1119.5" y="67.5" width="16" height="12" fill="#ececec" stroke="#444" stroke-width="1" stroke-dasharray="1.3 1.3"/><path d="M1129 67l1.5-2.5h2.5v3.5" fill="#f0cc30" stroke="#c8a020" stroke-width="0.8"/><use href="#bStar" x="1130" y="77"/>
<!-- show bookmarks -->
<rect x="1157.5" y="67.5" width="16.5" height="12" fill="#ececec" stroke="#444" stroke-width="1" stroke-dasharray="1.3 1.3"/><path d="M1167 68l1.5-3h3v4z" fill="#f0cc30" stroke="#c8a020" stroke-width="0.8"/>
<!-- text annotation -->
<path d="M1203 64.5h18v16h-13l-7 4.5 3-4.5h-1z" fill="#dde6ee" stroke="#8a9aaa" stroke-width="0.9"/><text x="1212" y="77" font-family="Liberation Serif" font-size="12" text-anchor="middle" fill="#333">T</text>
<use href="#drop" x="1225" y="78"/>
<use href="#handleV" x="1242" y="64"/>
<!-- help -->
<rect x="1253" y="64" width="20" height="21" fill="#5f8fcb" stroke="#243a55" stroke-width="1"/><rect x="1253" y="64" width="4" height="21" fill="#2a3d55"/><text x="1265.5" y="79" font-family="Liberation Sans" font-size="12" text-anchor="middle" fill="#fff">?</text>
<!-- whats this -->
<path d="M1291 64.5l0 13l3-3l2.5 5l2-1l-2.5-5h4.5z" fill="#fff" stroke="#222" stroke-width="1"/><text x="1307" y="85" font-family="Liberation Sans" font-size="22" text-anchor="middle" fill="#111">?</text>
<!-- ===== Toolbar 2 ===== -->
<use href="#handleV" x="66" y="100"/>
<!-- toggle editing pencils -->
<g transform="translate(76,99)">
<g opacity="0.55"><path d="M8.5 1.5l4.5 2.3-7.5 15.5-4.5-2.3z" fill="#e8b09a" stroke="#b89080" stroke-width="0.6"/><path d="M1 17l4.5 2.3-4.5 4z" fill="#bbb"/><path d="M8.5 1.5l4.5 2.3 .8-1.6-4.5-2.3z" fill="#fff" stroke="#aaa" stroke-width="0.5"/></g>
<path d="M13.5 1.5l4.5 2.3-7.5 15.5-4.5-2.3z" fill="#eda184" stroke="#c08068" stroke-width="0.6"/><path d="M15.7 2.6l-7.5 15.5" stroke="#f4c870" stroke-width="0.9"/><path d="M6 17l4.5 2.3-4.5 4z" fill="#aaa" stroke="#777" stroke-width="0.4"/><path d="M13.5 1.5l4.5 2.3 .8-1.6-4.5-2.3z" fill="#fff" stroke="#aaa" stroke-width="0.5"/>
</g>
<path d="M93.5 118.5h6.5l-3.25 4z" fill="#666"/>
<!-- pencil -->
<g transform="translate(116,99)"><path d="M9.5 1l5 2.5-8 16.5-4.5-2.3z" fill="#f3e040" stroke="#8a7a10" stroke-width="0.8"/><path d="M11.5 2.2l-8 16.3" stroke="#fff" stroke-width="0.8"/><path d="M2 17.7l4.5 2.3-5 3.5z" fill="#ccc" stroke="#555" stroke-width="0.7"/><path d="M9.5 1l5 2.5 1-2-5-2.5z" fill="#fff" stroke="#999" stroke-width="0.6"/></g>
<!-- save edits (faded) -->
<g transform="translate(151,99)" opacity="0.5"><rect x="0.5" y="0.5" width="19" height="20" rx="2" fill="#7fa4d4" stroke="#5a80b0" stroke-width="1"/><rect x="3.5" y="1.5" width="13" height="8" fill="#fff"/><path d="M5 3.5h10M5 5.5h10M5 7.5h10" stroke="#666" stroke-width="0.6"/><rect x="4" y="12.5" width="12" height="7.5" fill="#fff"/><rect x="6" y="14" width="2.5" height="5" fill="#6a8ab0"/></g>
<g transform="translate(160,104)" opacity="0.8"><path d="M7 0l4 2-6 12-3.5 3 .5-4.5z" fill="#e8a080" stroke="#c08070" stroke-width="0.6"/><path d="M1.5 12.5l3.5 1.5-3.5 3z" fill="#aaa"/></g>
<!-- add feature faded -->
<g transform="translate(190,100)" opacity="0.6"><path d="M1.5 2L8 16.5L14.5 2.5H21" fill="none" stroke="#3f5a7a" stroke-width="0.9"/><circle cx="1.5" cy="2" r="1.3" fill="#fff" stroke="#3f5a7a" stroke-width="0.8"/><circle cx="8" cy="16.5" r="1.3" fill="#fff" stroke="#3f5a7a" stroke-width="0.8"/><circle cx="14.5" cy="2.5" r="1.3" fill="#fff" stroke="#3f5a7a" stroke-width="0.8"/><circle cx="21" cy="2.5" r="1.3" fill="#fff" stroke="#3f5a7a" stroke-width="0.8"/></g><g opacity="0.65"><use href="#bStar" x="201" y="112"/></g>
<!-- move feature -->
<path d="M229 102c4-3 9 1 14-1c5-1 7 3 5 6c-2 3-6 2-9 3c-4 1-6 4-9 2c-3-2-4-8-1-10z" fill="#c0dcc0" stroke="#90a890" stroke-width="0.8" opacity="0.8"/><rect x="239" y="112" width="11" height="11" rx="1" fill="#7fa8d8" opacity="0.85"/><path d="M241 117.5h5M244 115l2.5 2.5-2.5 2.5" stroke="#fff" stroke-width="1.5" fill="none"/>
<!-- node tool -->
<g opacity="0.6"><path d="M267 121l5-14M272 105h14" stroke="#666" stroke-width="0.9"/><circle cx="272" cy="105" r="2.3" fill="#a8d0a8" stroke="#6a9a6a" stroke-width="0.8"/><path d="M276 120l9-9" stroke="#c08040" stroke-width="2.5"/><path d="M276 111l8 9" stroke="#c8c040" stroke-width="2"/><path d="M275 110a3 3 0 0 1 5-2" stroke="#777" stroke-width="1.5" fill="none"/></g>
<!-- delete selected -->
<rect x="305.5" y="102.5" width="15" height="15" fill="#f2eca0" stroke="#d8c040" stroke-width="0.8" stroke-dasharray="1.2 0.8" opacity="0.8"/><rect x="316" y="113" width="11" height="11" rx="1.5" fill="#e86868"/><path d="M318.5 115.5l6 6M324.5 115.5l-6 6" stroke="#fff" stroke-width="1.5"/>
<!-- cut -->
<g opacity="0.7"><path d="M341 105l17 8M341 111l17-2" stroke="#777" stroke-width="0.9"/><ellipse cx="360" cy="108" rx="3.2" ry="2.5" fill="none" stroke="#d04848" stroke-width="1.3"/><ellipse cx="360" cy="117" rx="3.2" ry="2.5" fill="none" stroke="#d04848" stroke-width="1.3"/></g>
<!-- copy -->
<g opacity="0.55"><path d="M387 102.5h6l3.5 3.5v11.5h-9.5z" fill="#fff" stroke="#888" stroke-width="0.8"/><path d="M381.5 105h6l3.5 3.5v11h-9.5z" fill="#fff" stroke="#888" stroke-width="0.8"/><path d="M383.5 111h5M383.5 113h5M383.5 115h5M383.5 117h5" stroke="#888" stroke-width="0.6"/></g>
<!-- paste -->
<g opacity="0.6"><rect x="420.5" y="101.5" width="15" height="19" rx="1" fill="#f3e6d6" stroke="#c89a60" stroke-width="0.9"/><rect x="424.5" y="100" width="7" height="3" fill="#fff" stroke="#c89a60" stroke-width="0.8"/><path d="M423 105h8l2 2v11h-10z" fill="#fff" stroke="#999" stroke-width="0.7"/><path d="M424.5 110h7M424.5 112h7M424.5 114h7M424.5 116h7" stroke="#888" stroke-width="0.6"/></g>
<use href="#handleV" x="455" y="100"/>
<!-- labels -->
<use href="#abcTag" x="463" y="102.5"/>
<rect x="501.5" y="103" width="23" height="17.5" fill="#d8e4f0" stroke="#6a9ee0" stroke-width="1"/>
<g transform="translate(502,103)"><path d="M0 5l3.5-5h14v10h-14z" fill="#f4d93a" stroke="#b49a10" stroke-width="0.8"/><text x="9" y="8" font-family="Liberation Sans" font-weight="bold" font-size="8" text-anchor="middle" fill="#222">ab</text><circle cx="18" cy="13" r="4.2" fill="#c8282c"/><path d="M17 9v-6" stroke="#eee" stroke-width="1.5"/></g>
<g transform="translate(540,103)" opacity="0.5"><path d="M0 5l3.5-5h14v10h-14z" fill="#f4d93a" stroke="#b49a10" stroke-width="0.8"/><text x="9" y="8" font-family="Liberation Sans" font-weight="bold" font-size="8" text-anchor="middle" fill="#222">ab</text><circle cx="18" cy="14" r="4.2" fill="#c8282c"/><path d="M17 9v-6" stroke="#eee" stroke-width="1.5"/></g>
<g opacity="0.55"><use href="#abcTag" x="577" y="103"/></g><path d="M584 117q7-5 14 0q-7 5-14 0z" fill="#fff" stroke="#666" stroke-width="0.8"/><circle cx="591" cy="117" r="2.2" fill="#4a7ab0"/>
<g opacity="0.55"><use href="#abcTag" x="615" y="103"/></g><rect x="627" y="112" width="11" height="11" rx="1" fill="#8db0d8" opacity="0.85"/><path d="M629 117.5h5M632 115l2.5 2.5-2.5 2.5" stroke="#fff" stroke-width="1.5" fill="none"/>
<g opacity="0.55"><use href="#abcTag" x="653" y="103"/></g><rect x="665" y="112" width="11" height="11" rx="1" fill="#8db0d8" opacity="0.85"/><circle cx="670.5" cy="117.5" r="3" fill="none" stroke="#fff" stroke-width="1.3"/>
<g opacity="0.55"><use href="#abcTag" x="691" y="103"/></g><rect x="703" y="112" width="11" height="11" rx="1" fill="#e6cc70" opacity="0.9"/><path d="M705 121l6-6" stroke="#fff" stroke-width="1.5"/>
<use href="#handleV" x="730" y="100"/><use href="#handleV" x="743" y="100"/>

<!-- ===== Left toolbar ===== -->
<use href="#handleH" x="65" y="136"/>
<g transform="translate(70,146)"><use href="#vnode"/></g><use href="#bPlus" x="83" y="160"/>
<!-- raster -->
<g transform="translate(69,184)"><rect width="19" height="19" fill="#6a9bd0"/><rect x="0" y="0" width="6.3" height="6.3" fill="#1f3a5a"/><rect x="12.6" y="0" width="6.3" height="6.3" fill="#1f3a5a"/><rect x="6.3" y="6.3" width="6.3" height="6.3" fill="#1f3a5a"/><rect x="0" y="12.6" width="6.3" height="6.3" fill="#1f3a5a"/></g><use href="#bPlus" x="83" y="199"/>
<!-- postgis -->
<g fill="#6f9dd0" stroke="#2a4d7a" stroke-width="1.1" stroke-linejoin="round"><path d="M72.5 222.8c-2.2 0-3.3 2.2-3.3 5c0 4 1.6 6.8 3.6 8l3-0.8v-10.5c0-1-1.3-1.7-3.3-1.7z"/><path d="M83.5 223c2.2 0 3.3 2 3.3 4.5c0 3-1 5.5-2.6 7l-1.5-0.5z"/><path d="M75.5 223.3c2.5-1.2 6-1.2 8 0c1.2 1 1.3 4 .8 6.8l-1.5 2.8c-.5 2-.8 5.5-2.2 6.8c-1 .6-2 .2-2.5-.8c-.6-2-.6-5-.6-7l-1.5-1c-.6-2-.8-5.2-.5-7.6z"/></g><path d="M76 233.5h-3M82.5 233.5h4" stroke="#2a4d7a" stroke-width="1.3"/><use href="#bPlus" x="83" y="236"/>
<!-- spatialite feather -->
<path d="M69 283c4-10 10-20 23-24c-2 8-8 15-17 18z" fill="#8ab0d8" stroke="#2d4d7a" stroke-width="1"/><path d="M69 283l15-17" stroke="#2d4d7a" stroke-width="0.8"/><use href="#bPlus" x="83" y="275"/>
<!-- mssql sail -->
<path d="M69 298c9 1 17 5 23 12c-7 2-15 5-22 10c3-7 3-15-1-22z" fill="#6a9ad0" stroke="#1f3a5a" stroke-width="1.2"/><path d="M75 299c3 5 3 12 0 19M81 301c2 5 2 10 0 15M87 305c1 3 1 6 0 8" stroke="#1f3a5a" stroke-width="0.9" fill="none"/><use href="#bPlus" x="83" y="313"/>
<!-- wms globe -->
<circle cx="81" cy="346.5" r="11" fill="#a8c4e4" stroke="#5a80b0" stroke-width="1"/><path d="M70 346.5h22M81 335.5v22M72 341h18M72 352h18" stroke="#fff" stroke-width="0.8"/><path d="M74 339l3 4-1 3 3 2v5M84 338l2 3 3-1 1 4-3 3" stroke="#3a5a80" stroke-width="1.2" fill="none"/><use href="#bPlus" x="83" y="351"/>
<!-- wcs globe -->
<circle cx="81" cy="384.5" r="11" fill="#2d4d7a"/><ellipse cx="81" cy="384.5" rx="5" ry="11" fill="#6a9ad0"/><path d="M70 384.5h22M72 379h18M72 390h18" stroke="#fff" stroke-width="1.1"/><use href="#bPlus" x="83" y="389"/>
<!-- wfs -->
<circle cx="81" cy="422" r="11" fill="#d8e6f4" stroke="#6a9ad0" stroke-width="1"/><path d="M70 422h22M81 411v22M72 416.5h18M72 427.5h18" stroke="#8ab0d8" stroke-width="0.7"/><path d="M74 417l5 12 4-12h6" fill="none" stroke="#222" stroke-width="1.1"/><circle cx="74" cy="417" r="1.3" fill="#fff" stroke="#222" stroke-width="0.8"/><circle cx="79" cy="429" r="1.3" fill="#fff" stroke="#222" stroke-width="0.8"/><circle cx="83" cy="417" r="1.3" fill="#fff" stroke="#222" stroke-width="0.8"/><circle cx="89" cy="417" r="1.3" fill="#fff" stroke="#222" stroke-width="0.8"/><use href="#bPlus" x="83" y="427"/>
<!-- delimited text -->
<path d="M76.5 452.5c2-1.5 5.5-1 6.5 1.5c1 3-.5 7-3 10c-1.5 2-3 3.5-5 4.5l-.8-.8c2-2 3.5-4 4-6.5c-2 .5-4-.5-4.3-2.5c-.3-2.2 1-4.5 2.6-6.2z" fill="#5f8fc8" stroke="#3a6aa8" stroke-width="0.6"/><use href="#bPlus" x="83" y="465"/>
<!-- new layer -->
<g transform="translate(70,489)"><use href="#vnode"/></g><use href="#bStar" x="83" y="503"/><use href="#drop" x="95" y="503"/>
<!-- remove layer -->
<rect x="70.5" y="528.5" width="19.5" height="19" fill="#f0f0f0" stroke="#666" stroke-width="1"/><use href="#bMinus" x="84" y="540"/>
<use href="#handleH" x="65" y="564"/>
<!-- ===== Layers dock ===== -->
<use href="#closeBtn" x="115" y="141"/><use href="#floatBtn" x="135" y="141"/>
<path d="M112 163h9l-4.5 7z" fill="#8a8a8a"/>
<rect x="134" y="160" width="12.5" height="12" rx="2" fill="url(#gChk)" stroke="#2a2a2a" stroke-width="1"/>
<path d="M137 165.5l3 4 6.5-12" fill="none" stroke="#15202e" stroke-width="2.4" stroke-linecap="round"/>
<g transform="translate(161,159.5)"><path d="M0.8 2.5L5.2 12.5L8.8 1.2H12" fill="none" stroke="#cfd8e8" stroke-width="0.8"/><circle cx="0.8" cy="2.5" r="1" fill="#fff"/><circle cx="5.2" cy="12.5" r="1" fill="#fff"/><circle cx="8.8" cy="1.2" r="1" fill="#fff"/><circle cx="12" cy="1.2" r="1" fill="#fff"/></g>
<path d="M151 185.5h16" stroke="#e8c43a" stroke-width="1.2"/>
<!-- ===== Lower dock ===== -->
<use href="#closeBtn" x="115" y="755"/><use href="#floatBtn" x="135" y="755"/>
<!-- enable map checkbox -->
<rect x="119.5" y="788.5" width="13" height="13" rx="2" fill="url(#gChk)" stroke="#555" stroke-width="1"/>
<path d="M122 794l3 4.5 6-11" fill="none" stroke="#15202e" stroke-width="2.2" stroke-linecap="round"/>
<!-- google icon in combo -->
<rect x="224.5" y="786.5" width="17" height="17" fill="#fff" rx="1"/>
<ellipse cx="229.5" cy="790" rx="2.4" ry="3" fill="#1660d0"/>
<path d="M225.2 792.8L229 795.4 225 797.8z" fill="#1a4fb0"/>
<ellipse cx="229.8" cy="800.3" rx="3.5" ry="2.5" fill="#f2b21e"/>
<rect x="233.5" y="787" width="7.5" height="5.8" fill="#ee2a1a"/>
<path d="M232 794.5c1-1.5 2-2.2 3.5-2.2h5.5v10.7h-6.5v-3c0-1.8-1-3.5-2.5-5.5z" fill="#0e9a40"/>
<path d="M434 793l3-3.5 3 3.5zM434 798l3 3.5 3-3.5z" fill="#333"/>
<!-- add layer icon on button -->
<g transform="translate(478,787)"><path d="M0 10l7-4 8 8-7 4z" fill="#6a6"/><path d="M2 9l4-2 7 7-3 2z" fill="#e06080"/><path d="M5 8l2-1 6 6-2 1z" fill="#4a80d0"/><circle cx="12" cy="5" r="4.3" fill="#2a9a3a" stroke="#186a22" stroke-width="0.6"/><path d="M12 2.5v5M9.5 5h5" stroke="#fff" stroke-width="1.5"/></g>
<!-- hide cross checkbox -->
<rect x="119.5" y="1140.5" width="13" height="13" rx="2.5" fill="url(#gChk)" stroke="#888" stroke-width="1"/>
<!-- button icons -->
<circle cx="286" cy="1147.5" r="7" fill="#7a9ef0" stroke="#3a6ad8" stroke-width="1.2"/><path d="M289.5 1145a4 4 0 1 0 0.5 4h-3" fill="none" stroke="#fff" stroke-width="1.6"/>
<g transform="translate(342,1141)"><rect x="0" y="2" width="15" height="10" rx="1" fill="#aaa" stroke="#666" stroke-width="0.8"/><rect x="2" y="0.5" width="4" height="2" fill="#888"/><circle cx="8.5" cy="7" r="3" fill="#ddd" stroke="#555" stroke-width="0.8"/><circle cx="8.5" cy="7" r="1.3" fill="#345"/></g>
<g transform="translate(406,1140)"><path d="M1 0h9l3 3v14h-12z" fill="#fff" stroke="#ccc" stroke-width="0.6"/><circle cx="7" cy="7" r="4.5" fill="#3a50a0"/><path d="M3 6h8M4 9h7" stroke="#fff" stroke-width="0.8"/><path d="M3 14h8" stroke="#888" stroke-width="0.8" stroke-dasharray="1 1"/></g>
<!-- ===== status bar icons ===== -->
<g transform="translate(1186,1183)"><rect x="0.5" y="0.5" width="19" height="19" fill="#f4f4f4" stroke="#666" stroke-width="1"/><path d="M6 5c-2 1-3 4-1 6M10 4c3 0 5 3 3 6M7 11c-1 2 0 5 3 5s4-3 2-5" stroke="#222" stroke-width="1.3" fill="none"/><circle cx="9" cy="14" r="1.2" fill="#222"/><path d="M14 4l3-2M15 7l3-1" stroke="#333" stroke-width="0.8"/></g>
<path d="M1733.5 1193l3 3.5 3-3.5z" fill="#333"/>
<g transform="translate(1752,1183)"><rect x="0.5" y="0.5" width="19" height="19" fill="#f4f4f4" stroke="#666" stroke-width="1"/><circle cx="8" cy="7" r="3.5" fill="none" stroke="#d03030" stroke-width="1.2"/><path d="M5.5 9.5l5-5" stroke="#d03030" stroke-width="1.2"/><path d="M5 17c3-4 8-9 12-14" stroke="#666" stroke-width="1.4"/><path d="M9 16c2-3 5-6 8-8" stroke="#999" stroke-width="1"/></g>
<rect x="1779" y="1185" width="13" height="13" rx="2" fill="url(#gChk)" stroke="#555" stroke-width="1"/>
<path d="M1781.5 1190.5l3 4.5 6-11" fill="none" stroke="#15202e" stroke-width="2.1" stroke-linecap="round"/>
<g transform="translate(1931,1183)"><rect x="0.5" y="0.5" width="19" height="19" fill="#f8f8f8" stroke="#666" stroke-width="1"/><circle cx="10" cy="10" r="7.5" fill="none" stroke="#777" stroke-width="1.2"/><ellipse cx="10" cy="10" rx="7.5" ry="3.5" fill="none" stroke="#888" stroke-width="0.9"/><ellipse cx="10" cy="10" rx="3.5" ry="7.5" fill="none" stroke="#888" stroke-width="0.9"/><rect x="7" y="7" width="6" height="6" fill="none" stroke="#777" stroke-width="1"/></g>
<path d="M1962 1206l11-11M1966 1206l7-7M1970 1206l3-3" stroke="#888" stroke-width="0.9"/>
</svg></body></html>
